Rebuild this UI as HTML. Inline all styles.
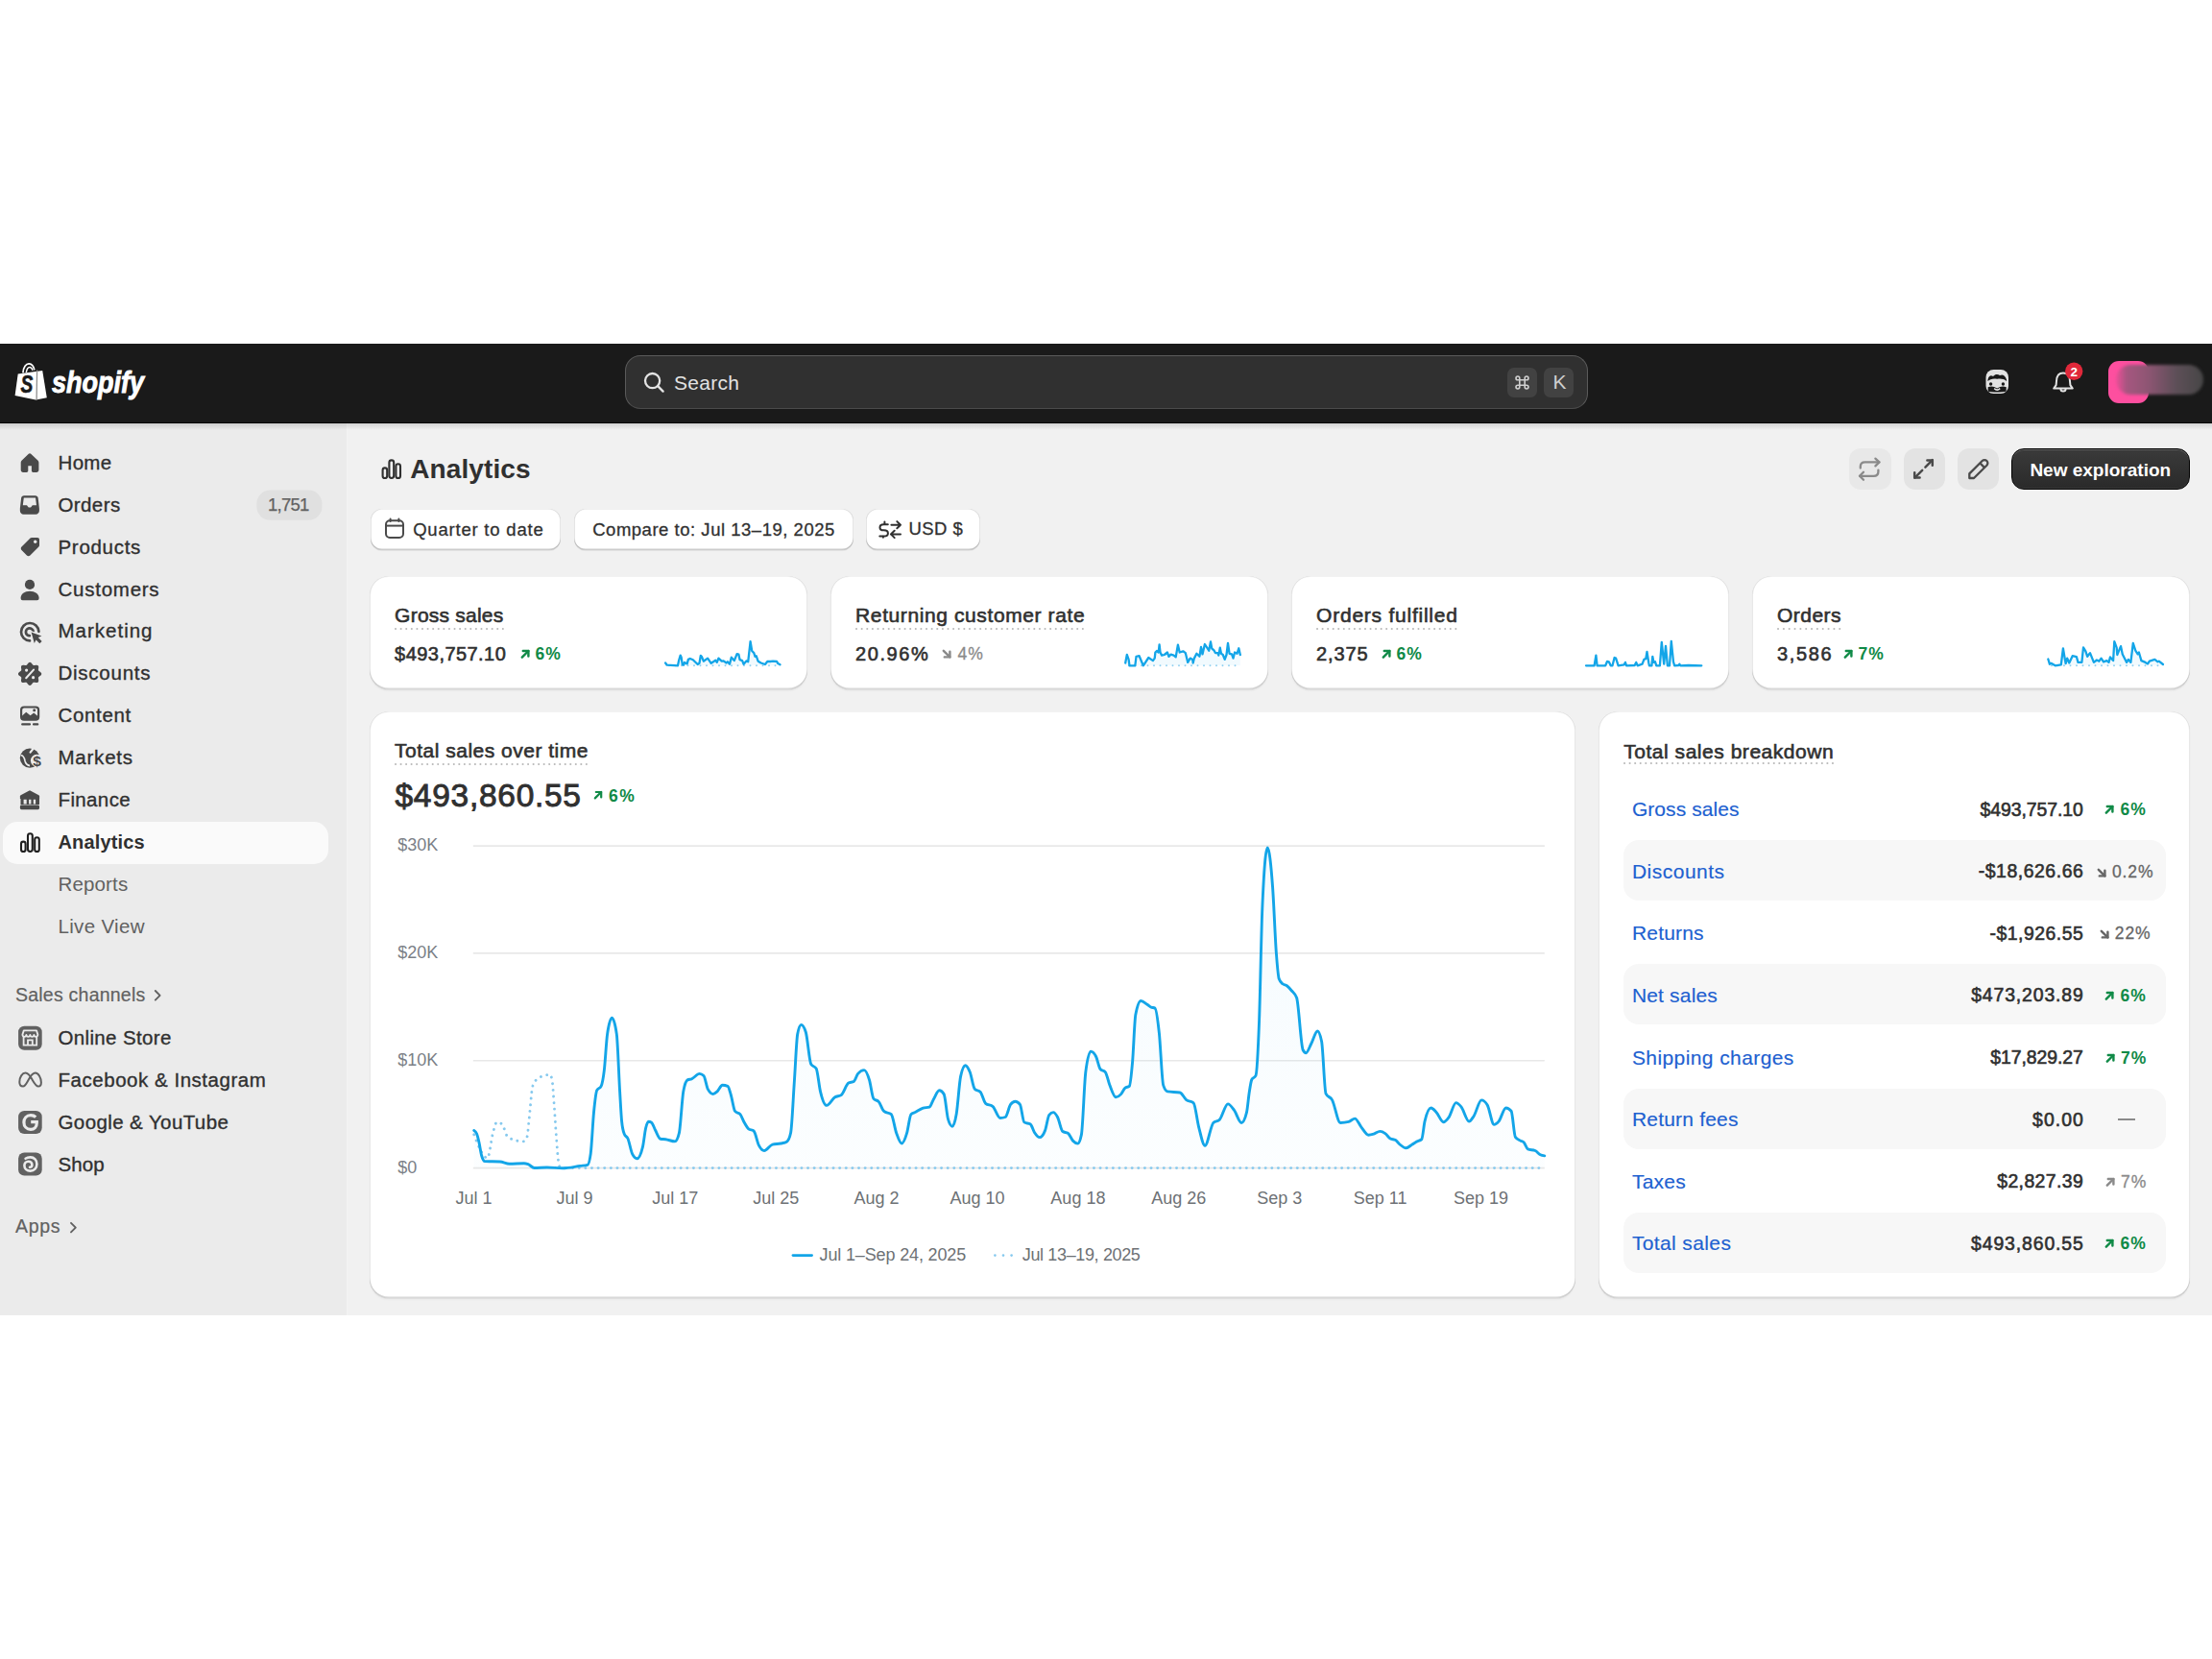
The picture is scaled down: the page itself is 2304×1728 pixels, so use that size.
<!DOCTYPE html>
<html><head><meta charset="utf-8"><title>Analytics</title>
<style>
*{box-sizing:border-box;margin:0;padding:0}
html,body{width:2304px;height:1728px;background:#fff;overflow:hidden;font-family:"Liberation Sans",sans-serif;color:#303030}
.abs{position:absolute}
.t{position:absolute;white-space:nowrap;line-height:1}
.nav-t{-webkit-text-stroke:0.35px #303030}
.card{position:absolute;background:#fff;border-radius:20px;box-shadow:0 1px 0 rgba(0,0,0,.05),0 2px 2px rgba(0,0,0,.03),inset 0 -1.5px 0 rgba(0,0,0,.15),inset 1px 0 0 rgba(0,0,0,.09),inset -1px 0 0 rgba(0,0,0,.09),inset 0 1px 0 rgba(0,0,0,.05)}
.btn{position:absolute;background:#fff;border-radius:12px;box-shadow:0 1px 0 rgba(0,0,0,.06),inset 0 -1.5px 0 rgba(0,0,0,.2),inset 1px 0 0 rgba(0,0,0,.1),inset -1px 0 0 rgba(0,0,0,.1),inset 0 1px 0 rgba(0,0,0,.06)}
.med{-webkit-text-stroke:0.3px currentColor}
</style></head>
<body>
<div class="abs" style="left:0;top:358px;width:2304px;height:83px;background:#1a1a1a;border-bottom:1px solid #050505"></div>
<div class="abs" style="left:0;top:441px;width:361px;height:929px;background:#ebebeb"></div>
<div class="abs" style="left:361px;top:441px;width:1943px;height:929px;background:#f1f1f1;border-left:1px solid #f3f3f3"></div>
<div class="abs" style="left:0;top:441px;width:2304px;height:7px;background:linear-gradient(rgba(0,0,0,.13),rgba(0,0,0,0))"></div>
<svg class="abs" style="left:0;top:358px" width="400" height="83" viewBox="0 358 400 83">
 <path d="M15.6,412 L18.7,389.6 L44.2,386 L48.8,414.2 L37.3,416.6 Z" fill="#fff"/>
 <path d="M38.6,385.6 L38.1,416.4" stroke="#8f8f8f" stroke-width="1.3"/>
 <path d="M23.9,388.4 C24.3,382.4 27.2,378.7 30.3,378.9 C33.1,379.1 35,381.4 35.9,385.4" fill="none" stroke="#fff" stroke-width="1.7"/>
 <path d="M27.3,388 C27.9,384.3 29.5,382.3 31.2,382.5 C32.6,382.7 33.5,383.9 34,385.8" fill="none" stroke="#fff" stroke-width="1.5"/>
 <text x="21.6" y="409.2" font-family="Liberation Sans" font-weight="700" font-style="italic" font-size="26" fill="#1a1a1a" stroke="#1a1a1a" stroke-width="0.6" transform="translate(21.6 0) scale(0.74 1) translate(-21.6 0)">S</text>
 <text x="54" y="408.7" font-family="Liberation Sans" font-weight="700" font-style="italic" font-size="31" fill="#fff" stroke="#fff" stroke-width="0.9" transform="translate(54 0) scale(0.873 1) translate(-54 0)">shopify</text>
</svg>
<div class="abs" style="left:651px;top:369.5px;width:1003px;height:56px;border-radius:16px;background:#303030;border:1.5px solid #5a5a5a;border-bottom-color:#4a4a4a"></div>
<svg class="abs" style="left:660px;top:380px" width="40" height="40" viewBox="660 380 40 40">
 <circle cx="679.6" cy="396.6" r="7.6" fill="none" stroke="#e3e3e3" stroke-width="2.3"/>
 <path d="M685.2,402.2 L690.6,407.6" stroke="#e3e3e3" stroke-width="2.4" stroke-linecap="round"/>
</svg>
<div class="t" style="left:702px;top:388px;font-size:21px;color:#e3e3e3;letter-spacing:0.26px">Search</div>
<div class="abs" style="left:1570px;top:382.5px;width:31px;height:31.5px;border-radius:7px;background:#424242"></div>
<div class="abs" style="left:1608px;top:382.5px;width:31px;height:31.5px;border-radius:7px;background:#424242"></div>
<svg class="abs" style="left:1578px;top:390.5px" width="15" height="15" viewBox="0 0 15 15">
 <path d="M4.8 4.8 V2.9 A1.9 1.9 0 1 0 2.9 4.8 H12.1 A1.9 1.9 0 1 0 10.2 2.9 V12.1 A1.9 1.9 0 1 0 12.1 10.2 H2.9 A1.9 1.9 0 1 0 4.8 12.1 Z" fill="none" stroke="#cfcfcf" stroke-width="1.6"/>
</svg>
<div class="t" style="left:1617.4px;top:387.4px;font-size:21px;color:#cfcfcf">K</div>
<svg class="abs" style="left:2060px;top:370px" width="244" height="60" viewBox="2060 370 244 60">
 <rect x="2068.5" y="385" width="23.5" height="25" rx="8" fill="#e3e3e3"/>
 <path d="M2070.5,395.5 C2071.5,391 2074,390.8 2076,392 C2078,389.6 2081,389.4 2083,391 C2085.5,389.6 2088.6,390.6 2090,395.5 L2090.2,397 C2087,394.6 2084,394.2 2080.2,394.8 C2076,394 2073,394.8 2070.4,397 Z" fill="#1a1a1a"/>
 <circle cx="2073.6" cy="400" r="1.7" fill="#1a1a1a"/>
 <circle cx="2086.4" cy="400" r="1.7" fill="#1a1a1a"/>
 <path d="M2070.6,403.2 C2074,401.8 2077,402.4 2080.2,404.4 C2083.4,402.4 2086.4,401.8 2089.8,403.2 L2089.6,407.8 C2086,408.8 2074,408.8 2070.8,407.8 Z" fill="#1a1a1a"/>
 <path d="M2077.2,404.6 Q2080.2,407.6 2083.2,404.6" fill="none" stroke="#e3e3e3" stroke-width="1.5"/>
 <path d="M2149,388.6 C2144.2,388.6 2142.2,392.5 2142,397 L2141.6,401.2 L2139.2,404.6 L2158.8,404.6 L2156.4,401.2 L2156,397 C2155.8,392.5 2153.8,388.6 2149,388.6 Z" fill="none" stroke="#e3e3e3" stroke-width="2" stroke-linejoin="round"/>
 <path d="M2146.4,405 A2.6,2.6 0 0 0 2151.6,405" fill="none" stroke="#e3e3e3" stroke-width="2"/>
 <circle cx="2160.2" cy="386.8" r="9.2" fill="#e0283a"/>
 <text x="2160.2" y="391.6" text-anchor="middle" font-family="Liberation Sans" font-weight="700" font-size="13.5" fill="#fff">2</text>
</svg>
<div class="abs" style="left:2196px;top:376px;width:42px;height:43.5px;border-radius:11px;background:#fd4f9f"></div>
<div class="abs" style="left:2204px;top:379.5px;width:91px;height:31px;border-radius:15.5px;background:linear-gradient(90deg,rgba(170,80,125,0.2) 0%,#a65680 12%,#8c5572 38%,#5e4f58 68%,#464646 100%);filter:blur(1.6px)"></div>


<div id="side"></div>
<svg class="abs" style="left:0;top:441px" width="361" height="929" viewBox="0 441 361 929">
 <g fill="#4a4a4a">
  <path d="M31 472.3 C30.5 472.3 30.1 472.5 29.8 472.8 L22.5 479.8 C22 480.3 21.7 481 21.7 481.7 V489.6 C21.7 490.9 22.8 492 24.1 492 H27.6 C28.5 492 29.3 491.2 29.3 490.3 V485.3 H32.9 V490.3 C32.9 491.2 33.7 492 34.6 492 H38 C39.3 492 40.4 490.9 40.4 489.6 V481.7 C40.4 481 40.1 480.3 39.6 479.8 L32.2 472.8 C31.9 472.5 31.5 472.3 31 472.3 Z"/>
  <path fill-rule="evenodd" d="M25 516.2 H36.8 C38.4 516.2 39.5 517.3 39.7 518.8 L40.9 529.5 V532 C40.9 534 39.3 535.7 37.3 535.7 H24.4 C22.4 535.7 20.85 534 20.85 532 V529.5 L22.1 518.8 C22.3 517.3 23.4 516.2 25 516.2 Z M24.8 518.6 H37 L38 526.3 H34.6 C33.8 526.3 33.3 526.8 32.9 527.4 C32.4 528.2 31.7 528.6 30.9 528.6 C30.1 528.6 29.4 528.2 28.9 527.4 C28.5 526.8 28 526.3 27.2 526.3 H23.8 Z"/>
  <path d="M33 560 H39 C40.2 560 41 560.8 41 562 V568 C41 568.6 40.8 569.1 40.4 569.5 L31.4 578.5 C30.4 579.5 28.9 579.5 27.9 578.5 L22.5 573.1 C21.5 572.1 21.5 570.6 22.5 569.6 L31.5 560.6 C31.9 560.2 32.4 560 33 560 Z"/>
  <circle cx="36.7" cy="564.3" r="1.7" fill="#ebebeb"/>
  <circle cx="31" cy="608.9" r="5.1"/>
  <path d="M21.6 623 C21.6 618.8 25.6 615.8 31 615.8 C36.4 615.8 40.6 618.8 40.6 623 C40.6 624.3 39.8 625.3 38.6 625.3 H23.6 C22.4 625.3 21.6 624.3 21.6 623 Z"/>
  <path d="M31 667.4 A9.2 9.2 0 1 1 40.4 657.8" fill="none" stroke="#4a4a4a" stroke-width="2.7" stroke-linecap="round"/>
  <path d="M30.8 662.2 A3.9 3.9 0 1 1 34.6 657.4" fill="none" stroke="#4a4a4a" stroke-width="2.7" stroke-linecap="round"/>
  <path d="M32.6 658.4 L43.4 662.4 L39.8 664.1 L43.6 667.9 L41.3 670.2 L37.5 666.4 L35.8 670 Z" stroke="#ebebeb" stroke-width="2.2" stroke-linejoin="round" paint-order="stroke"/>
  <path d="M31.10,689.75 L31.88,689.94 L32.60,690.47 L33.23,691.21 L33.76,691.98 L34.26,692.60 L34.79,692.98 L35.44,693.09 L36.24,693.00 L37.16,692.84 L38.12,692.76 L39.00,692.89 L39.69,693.31 L40.11,694.00 L40.24,694.88 L40.16,695.84 L40.00,696.76 L39.91,697.56 L40.02,698.21 L40.40,698.74 L41.02,699.24 L41.79,699.77 L42.53,700.40 L43.06,701.12 L43.25,701.90 L43.06,702.68 L42.53,703.40 L41.79,704.03 L41.02,704.56 L40.40,705.06 L40.02,705.59 L39.91,706.24 L40.00,707.04 L40.16,707.96 L40.24,708.92 L40.11,709.80 L39.69,710.49 L39.00,710.91 L38.12,711.04 L37.16,710.96 L36.24,710.80 L35.44,710.71 L34.79,710.82 L34.26,711.20 L33.76,711.82 L33.23,712.59 L32.60,713.33 L31.88,713.86 L31.10,714.05 L30.32,713.86 L29.60,713.33 L28.97,712.59 L28.44,711.82 L27.94,711.20 L27.41,710.82 L26.76,710.71 L25.96,710.80 L25.04,710.96 L24.08,711.04 L23.20,710.91 L22.51,710.49 L22.09,709.80 L21.96,708.92 L22.04,707.96 L22.20,707.04 L22.29,706.24 L22.18,705.59 L21.80,705.06 L21.18,704.56 L20.41,704.03 L19.67,703.40 L19.14,702.68 L18.95,701.90 L19.14,701.12 L19.67,700.40 L20.41,699.77 L21.18,699.24 L21.80,698.74 L22.18,698.21 L22.29,697.56 L22.20,696.76 L22.04,695.84 L21.96,694.88 L22.09,694.00 L22.51,693.31 L23.20,692.89 L24.08,692.76 L25.04,692.84 L25.96,693.00 L26.76,693.09 L27.41,692.98 L27.94,692.60 L28.44,691.98 L28.97,691.21 L29.60,690.47 L30.32,689.94 Z"/>
  <circle cx="27.6" cy="698.1" r="1.6" fill="#ebebeb"/>
  <circle cx="34.6" cy="705.7" r="1.6" fill="#ebebeb"/>
  <path d="M35 697.6 L27.2 706.2" stroke="#ebebeb" stroke-width="2.1" stroke-linecap="round"/>
  <rect x="22.1" y="736.5" width="18" height="13.2" rx="3" fill="none" stroke="#4a4a4a" stroke-width="2.2"/>
  <path d="M22 746.6 L27.2 741.8 L31.6 745.2 L35.2 742.4 L40.1 746.6 V749.6 H22 Z"/>
  <circle cx="35.7" cy="739.8" r="1.5"/>
  <path d="M23.2 754.4 H31 M35 754.4 H39.2" stroke="#4a4a4a" stroke-width="2.2" stroke-linecap="round"/>
  <circle cx="31" cy="789.6" r="10.2"/>
  <circle cx="38.3" cy="792.2" r="6.4" fill="#ebebeb"/>
  <path d="M34.6 779.8 L31.6 783.6" stroke="#ebebeb" stroke-width="2.2" stroke-linecap="round"/>
  <path d="M21.5 786.5 C24 786.8 25.5 789.5 26 792.5 C26.6 795.5 28.6 797 31 797.6" fill="none" stroke="#ebebeb" stroke-width="1.6"/>
  <text x="38.6" y="798" text-anchor="middle" font-family="Liberation Sans" font-weight="700" font-size="15.5">$</text>
  <path d="M31 823.3 L21.6 828.2 C21.1 828.5 20.9 829 20.9 829.6 V832 H41.1 V829.6 C41.1 829 40.9 828.5 40.4 828.2 Z"/>
  <path d="M21.5 832 H41 V838 H21.5 Z M24.6 832.8 V837.4 H27.7 V832.8 Z M30.1 832.8 V837.4 H32.4 V832.8 Z M34.8 832.8 V837.4 H37.1 V832.8 Z" fill-rule="evenodd"/>
  <rect x="20.9" y="838.6" width="20.1" height="4.6" rx="1.4"/>
 </g>
 <rect x="3" y="856" width="339" height="44" rx="15" fill="#fafafa"/>
 <g fill="none" stroke="#1f1f1f" stroke-width="2.1">
  <rect x="22" y="876.6" width="4.6" height="10.4" rx="2.3"/>
  <rect x="29" y="868.2" width="4.8" height="18.8" rx="2.4"/>
  <rect x="36.2" y="872.2" width="4.6" height="14.8" rx="2.3"/>
 </g>
 <g fill="#616161">
  <rect x="19.1" y="1068.7" width="24.6" height="25.1" rx="6.2"/>
  <path d="M24.8 1073.4 H38 L39.4 1077.6 C39.4 1079 38.6 1079.8 37.4 1079.8 C36.3 1079.8 35.4 1079 35.4 1077.8 C35.4 1079 34.5 1079.8 33.4 1079.8 C32.3 1079.8 31.4 1079 31.4 1077.8 C31.4 1079 30.5 1079.8 29.4 1079.8 C28.3 1079.8 27.4 1079 27.4 1077.8 C27.4 1079 26.5 1079.8 25.4 1079.8 C24.2 1079.8 23.4 1079 23.4 1077.6 Z" fill="none" stroke="#ebebeb" stroke-width="1.8" stroke-linejoin="round"/>
  <path d="M24.6 1080 V1088.6 H38.2 V1080 M29 1088.6 V1083.4 H33.8 V1088.6" fill="none" stroke="#ebebeb" stroke-width="1.8"/>
  <path d="M24 1131.6 C21.6 1131.6 20.3 1129.6 20.3 1127 C20.3 1122 23.2 1117.6 26.6 1117.6 C29.6 1117.6 31.5 1121 33.5 1124.5 C35.5 1128 37.5 1131.6 40 1131.6 C42 1131.6 42.9 1129.8 42.9 1127.5 C42.9 1122.5 40 1117.6 36.8 1117.6 C33.8 1117.6 31.8 1121 29.8 1124.5 C27.8 1128 26.3 1131.6 24 1131.6 Z" fill="none" stroke="#616161" stroke-width="2"/>
  <rect x="19.1" y="1156.9" width="24.6" height="24.1" rx="6.2"/>
  <path d="M37.2 1163.6 C36 1162.4 34.2 1161.6 32 1161.6 C27.7 1161.6 24.9 1164.8 24.9 1169 C24.9 1173.2 27.8 1176.4 32 1176.4 C35.6 1176.4 38.3 1174 38.3 1169.8 V1168.6 H32.2" fill="none" stroke="#ebebeb" stroke-width="3.2"/>
  <rect x="19.1" y="1200.5" width="24.6" height="24.1" rx="6.2"/>
  <path d="M26.6 1206.8 C28 1205.8 29.8 1205.4 31.6 1205.4 C35.6 1205.4 38.4 1208.5 38.4 1212.5 C38.4 1216.6 35.5 1219.6 31.6 1219.6 C28 1219.6 25.4 1217.2 25.4 1214 C25.4 1211.6 27.2 1209.8 29.6 1209.8 C31.8 1209.8 33.4 1211.3 33.4 1213.3 C33.4 1214.8 32.4 1215.8 31 1215.8" fill="none" stroke="#ebebeb" stroke-width="2.6" stroke-linecap="round"/>
 </g>
 <path d="M161.8 1032 L166.6 1036.8 L161.8 1041.6" fill="none" stroke="#616161" stroke-width="1.9" stroke-linecap="round" stroke-linejoin="round"/>
 <path d="M74 1273.8 L78.8 1278.6 L74 1283.4" fill="none" stroke="#616161" stroke-width="1.9" stroke-linecap="round" stroke-linejoin="round"/>
 <rect x="267.4" y="510.6" width="68" height="31.2" rx="14" fill="#e0e0e0"/>
</svg><div class="t" style="left:60.50px;top:471.85px;font-size:20.5px;color:#303030;font-weight:400;-webkit-text-stroke:0.35px #303030;letter-spacing:0.33px">Home</div>
<div class="t" style="left:60.50px;top:515.75px;font-size:20.5px;color:#303030;font-weight:400;-webkit-text-stroke:0.35px #303030;letter-spacing:0.4px">Orders</div>
<div class="t" style="left:60.50px;top:559.65px;font-size:20.5px;color:#303030;font-weight:400;-webkit-text-stroke:0.35px #303030;letter-spacing:0.7px">Products</div>
<div class="t" style="left:60.50px;top:603.55px;font-size:20.5px;color:#303030;font-weight:400;-webkit-text-stroke:0.35px #303030;letter-spacing:0.75px">Customers</div>
<div class="t" style="left:60.50px;top:647.45px;font-size:20.5px;color:#303030;font-weight:400;-webkit-text-stroke:0.35px #303030;letter-spacing:1.0px">Marketing</div>
<div class="t" style="left:60.50px;top:691.25px;font-size:20.5px;color:#303030;font-weight:400;-webkit-text-stroke:0.35px #303030;letter-spacing:0.75px">Discounts</div>
<div class="t" style="left:60.50px;top:735.15px;font-size:20.5px;color:#303030;font-weight:400;-webkit-text-stroke:0.35px #303030;letter-spacing:0.67px">Content</div>
<div class="t" style="left:60.50px;top:779.05px;font-size:20.5px;color:#303030;font-weight:400;-webkit-text-stroke:0.35px #303030;letter-spacing:0.77px">Markets</div>
<div class="t" style="left:60.50px;top:822.95px;font-size:20.5px;color:#303030;font-weight:400;-webkit-text-stroke:0.35px #303030;letter-spacing:0.37px">Finance</div>
<div class="t" style="left:60.50px;top:867.27px;font-size:20px;color:#303030;font-weight:700;letter-spacing:0.15px">Analytics</div>
<div class="t" style="left:60.50px;top:910.65px;font-size:20.5px;color:#616161;font-weight:400;letter-spacing:0.15px">Reports</div>
<div class="t" style="left:60.50px;top:954.55px;font-size:20.5px;color:#616161;font-weight:400;letter-spacing:0.33px">Live View</div>
<div class="t" style="right:1983.40px;top:517.14px;font-size:18.5px;color:#616161;font-weight:400;-webkit-text-stroke:0.25px #616161;letter-spacing:-0.8px;margin-right:-0.8px">1,751</div>
<div class="t" style="left:16.00px;top:1026.99px;font-size:19.5px;color:#616161;font-weight:400;-webkit-text-stroke:0.2px #616161;letter-spacing:0.23px">Sales channels</div>
<div class="t" style="left:60.50px;top:1070.65px;font-size:20.5px;color:#303030;font-weight:400;-webkit-text-stroke:0.35px #303030;letter-spacing:0.35px">Online Store</div>
<div class="t" style="left:60.50px;top:1114.65px;font-size:20.5px;color:#303030;font-weight:400;-webkit-text-stroke:0.35px #303030;letter-spacing:0.53px">Facebook &amp; Instagram</div>
<div class="t" style="left:60.50px;top:1158.75px;font-size:20.5px;color:#303030;font-weight:400;-webkit-text-stroke:0.35px #303030;letter-spacing:0.4px">Google &amp; YouTube</div>
<div class="t" style="left:60.50px;top:1202.55px;font-size:20.5px;color:#303030;font-weight:400;-webkit-text-stroke:0.35px #303030;letter-spacing:0.1px">Shop</div>
<div class="t" style="left:16.00px;top:1268.49px;font-size:19.5px;color:#616161;font-weight:400;-webkit-text-stroke:0.2px #616161;letter-spacing:0.7px">Apps</div>
<svg class="abs" style="left:390px;top:470px" width="40" height="36" viewBox="390 470 40 36"><g fill="none" stroke="#303030" stroke-width="2.1"><rect x="398.6" y="487.4" width="4.6" height="10.6" rx="2.3"/><rect x="405.4" y="479.4" width="4.8" height="18.6" rx="2.4"/><rect x="412.4" y="483.2" width="4.6" height="14.8" rx="2.3"/></g></svg>
<div class="t" style="left:427.20px;top:474.80px;font-size:28px;color:#303030;font-weight:700;letter-spacing:0.11px">Analytics</div>
<div class="abs" style="left:1926px;top:466.5px;width:43.5px;height:43.5px;border-radius:12px;background:#e8e8e8"></div>
<div class="abs" style="left:1982.5px;top:466.5px;width:43.5px;height:43.5px;border-radius:12px;background:#e3e3e3"></div>
<div class="abs" style="left:2038.5px;top:466.5px;width:43.5px;height:43.5px;border-radius:12px;background:#e3e3e3"></div>
<svg class="abs" style="left:1926px;top:466px" width="160" height="44" viewBox="1926 466 160 44"><g fill="none" stroke="#8a8a8a" stroke-width="2.3" stroke-linecap="round" stroke-linejoin="round"><path d="M1937.8 487.6 V486 C1937.8 483.2 1939.8 481.4 1942.6 481.4 H1957.4"/><path d="M1953.4 477.6 L1957.4 481.4 L1953.4 485.4"/><path d="M1956.4 489.6 V491.2 C1956.4 494 1954.4 495.8 1951.6 495.8 H1937"/><path d="M1941 491.8 L1937 495.8 L1941 499.8"/></g><g fill="none" stroke="#4a4a4a" stroke-width="2.5" stroke-linecap="round" stroke-linejoin="round"><path d="M2002.2 489.8 L1994.4 497.6"/><path d="M2005.4 486.6 L2012.8 479.2"/><path d="M2007.4 479.4 H2012.8 V484.8"/><path d="M1994.2 492.2 V497.6 H1999.6"/></g><g fill="none" stroke="#4a4a4a" stroke-width="2.3" stroke-linejoin="round"><path d="M2051.3 498 V493.4 L2064.7 480 C2066 478.7 2068.1 478.7 2069.4 480 C2070.7 481.3 2070.7 483.4 2069.4 484.7 L2056 498 Z"/><path d="M2062.4 482.4 L2067.1 487.1"/></g></svg>
<div class="abs" style="left:2095px;top:466.8px;width:185.5px;height:43.2px;border-radius:13px;background:linear-gradient(#3a3a3a,#2a2a2a);border:1.2px solid #000;box-shadow:inset 0 1px 0 rgba(255,255,255,.22),inset 0 -1px 0 rgba(255,255,255,.08)"></div>
<div class="t" style="left:2114.40px;top:480.12px;font-size:19px;color:#fff;font-weight:700;letter-spacing:0px">New exploration</div>
<div class="btn" style="left:385.9px;top:529.8px;width:198.4px;height:42.9px"></div>
<div class="btn" style="left:597.5px;top:529.8px;width:291.6px;height:42.9px"></div>
<div class="btn" style="left:901.8px;top:529.8px;width:119.3px;height:42.9px"></div>
<svg class="abs" style="left:396px;top:535px" width="30" height="32" viewBox="396 535 30 32"><g fill="none" stroke="#4a4a4a" stroke-width="2"><rect x="402" y="542.2" width="18" height="17.8" rx="4"/><path d="M402.2 547.6 H419.8"/><path d="M406.6 540.4 V543 M415.4 540.4 V543" stroke-linecap="round"/></g></svg>
<div class="t" style="left:430.20px;top:542.54px;font-size:18.5px;color:#303030;font-weight:400;-webkit-text-stroke:0.3px #303030;letter-spacing:0.79px">Quarter to date</div>
<div class="t" style="left:617.20px;top:542.54px;font-size:18.5px;color:#303030;font-weight:400;-webkit-text-stroke:0.3px #303030;letter-spacing:0.52px">Compare to: Jul 13&#8211;19, 2025</div>
<svg class="abs" style="left:910px;top:538px" width="34" height="26" viewBox="910 538 34 26"><g fill="none" stroke="#303030" stroke-width="2" stroke-linecap="round" stroke-linejoin="round"><path d="M924.8 546.2 H920.4 C918 546.2 916.5 547.6 916.5 549.4 C916.5 551.3 918 552.3 920.6 552.3 C923.3 552.3 924.9 553.5 924.9 555.5 C924.9 557.4 923.4 558.5 921 558.5 H916.3"/><path d="M921.4 543.4 V546 M919.9 558.8 V559.8"/><path d="M928.4 546.7 H938 M934.3 543.1 L938 546.7 L934.3 550.3"/><path d="M938 556.4 H927.9 M931.7 552.7 L927.9 556.4 L931.7 560.1"/></g></svg>
<div class="t" style="left:946.40px;top:542.34px;font-size:18.5px;color:#303030;font-weight:400;-webkit-text-stroke:0.3px #303030;letter-spacing:0.5px">USD $</div>
<div class="card" style="left:384.9px;top:599.6px;width:456px;height:118.4px"></div>
<div class="card" style="left:864.9px;top:599.6px;width:456px;height:118.4px"></div>
<div class="card" style="left:1344.9px;top:599.6px;width:456px;height:118.4px"></div>
<div class="card" style="left:1824.9px;top:599.6px;width:456px;height:118.4px"></div>
<div class="t" style="left:411.10px;top:630.42px;font-size:21px;color:#303030;font-weight:400;letter-spacing:0.23px;-webkit-text-stroke:0.6px #303030">Gross sales</div>
<div class="t" style="left:411.10px;top:671.17px;font-size:20px;color:#303030;font-weight:400;letter-spacing:0.45px;-webkit-text-stroke:0.6px #303030">$493,757.10</div>
<div class="t" style="left:891.10px;top:630.42px;font-size:21px;color:#303030;font-weight:400;letter-spacing:0.6px;-webkit-text-stroke:0.6px #303030">Returning customer rate</div>
<div class="t" style="left:891.10px;top:671.17px;font-size:20px;color:#303030;font-weight:400;letter-spacing:1.56px;-webkit-text-stroke:0.6px #303030">20.96%</div>
<div class="t" style="left:1371.10px;top:630.42px;font-size:21px;color:#303030;font-weight:400;letter-spacing:0.76px;-webkit-text-stroke:0.6px #303030">Orders fulfilled</div>
<div class="t" style="left:1371.10px;top:671.17px;font-size:20px;color:#303030;font-weight:400;letter-spacing:0.9px;-webkit-text-stroke:0.6px #303030">2,375</div>
<div class="t" style="left:1851.10px;top:630.42px;font-size:21px;color:#303030;font-weight:400;letter-spacing:0.44px;-webkit-text-stroke:0.6px #303030">Orders</div>
<div class="t" style="left:1851.10px;top:671.17px;font-size:20px;color:#303030;font-weight:400;letter-spacing:1.6px;-webkit-text-stroke:0.6px #303030">3,586</div>
<svg class="abs" style="left:410.1px;top:651.5px" width="116.9" height="6" viewBox="410.10 651.55 116.90 6"><g fill="#b8b8b8"><circle cx="412.15" cy="654.55" r="1.05"/><circle cx="417.74" cy="654.55" r="1.05"/><circle cx="423.33" cy="654.55" r="1.05"/><circle cx="428.92" cy="654.55" r="1.05"/><circle cx="434.51" cy="654.55" r="1.05"/><circle cx="440.10" cy="654.55" r="1.05"/><circle cx="445.69" cy="654.55" r="1.05"/><circle cx="451.28" cy="654.55" r="1.05"/><circle cx="456.87" cy="654.55" r="1.05"/><circle cx="462.46" cy="654.55" r="1.05"/><circle cx="468.05" cy="654.55" r="1.05"/><circle cx="473.64" cy="654.55" r="1.05"/><circle cx="479.23" cy="654.55" r="1.05"/><circle cx="484.82" cy="654.55" r="1.05"/><circle cx="490.41" cy="654.55" r="1.05"/><circle cx="496.00" cy="654.55" r="1.05"/><circle cx="501.59" cy="654.55" r="1.05"/><circle cx="507.18" cy="654.55" r="1.05"/><circle cx="512.77" cy="654.55" r="1.05"/><circle cx="518.36" cy="654.55" r="1.05"/><circle cx="523.95" cy="654.55" r="1.05"/></g></svg>
<svg class="abs" style="left:540.5px;top:674.7px" width="12.4" height="12.4" viewBox="540.50 674.70 12.40 12.40"><g fill="none" stroke="#108a47" stroke-width="2.45" stroke-linecap="round" stroke-linejoin="round"><path d="M543.30 684.30 L549.90 677.70"/><path d="M544.30 677.70 H549.90 V683.30"/></g></svg>
<div class="t" style="left:557.50px;top:672.69px;font-size:17.5px;color:#108a47;font-weight:700;letter-spacing:0.9px">6%</div>
<svg class="abs" style="left:890.1px;top:651.5px" width="240.9" height="6" viewBox="890.10 651.55 240.90 6"><g fill="#b8b8b8"><circle cx="892.15" cy="654.55" r="1.05"/><circle cx="897.76" cy="654.55" r="1.05"/><circle cx="903.38" cy="654.55" r="1.05"/><circle cx="908.99" cy="654.55" r="1.05"/><circle cx="914.61" cy="654.55" r="1.05"/><circle cx="920.22" cy="654.55" r="1.05"/><circle cx="925.84" cy="654.55" r="1.05"/><circle cx="931.45" cy="654.55" r="1.05"/><circle cx="937.06" cy="654.55" r="1.05"/><circle cx="942.68" cy="654.55" r="1.05"/><circle cx="948.29" cy="654.55" r="1.05"/><circle cx="953.91" cy="654.55" r="1.05"/><circle cx="959.52" cy="654.55" r="1.05"/><circle cx="965.14" cy="654.55" r="1.05"/><circle cx="970.75" cy="654.55" r="1.05"/><circle cx="976.36" cy="654.55" r="1.05"/><circle cx="981.98" cy="654.55" r="1.05"/><circle cx="987.59" cy="654.55" r="1.05"/><circle cx="993.21" cy="654.55" r="1.05"/><circle cx="998.82" cy="654.55" r="1.05"/><circle cx="1004.44" cy="654.55" r="1.05"/><circle cx="1010.05" cy="654.55" r="1.05"/><circle cx="1015.66" cy="654.55" r="1.05"/><circle cx="1021.28" cy="654.55" r="1.05"/><circle cx="1026.89" cy="654.55" r="1.05"/><circle cx="1032.51" cy="654.55" r="1.05"/><circle cx="1038.12" cy="654.55" r="1.05"/><circle cx="1043.74" cy="654.55" r="1.05"/><circle cx="1049.35" cy="654.55" r="1.05"/><circle cx="1054.96" cy="654.55" r="1.05"/><circle cx="1060.58" cy="654.55" r="1.05"/><circle cx="1066.19" cy="654.55" r="1.05"/><circle cx="1071.81" cy="654.55" r="1.05"/><circle cx="1077.42" cy="654.55" r="1.05"/><circle cx="1083.04" cy="654.55" r="1.05"/><circle cx="1088.65" cy="654.55" r="1.05"/><circle cx="1094.26" cy="654.55" r="1.05"/><circle cx="1099.88" cy="654.55" r="1.05"/><circle cx="1105.49" cy="654.55" r="1.05"/><circle cx="1111.11" cy="654.55" r="1.05"/><circle cx="1116.72" cy="654.55" r="1.05"/><circle cx="1122.34" cy="654.55" r="1.05"/><circle cx="1127.95" cy="654.55" r="1.05"/></g></svg>
<svg class="abs" style="left:980.3px;top:675.0px" width="12.4" height="12.4" viewBox="980.30 675.00 12.40 12.40"><g fill="none" stroke="#8a8a8a" stroke-width="2.45" stroke-linecap="round" stroke-linejoin="round"><path d="M983.10 677.80 L989.70 684.40"/><path d="M984.10 684.40 H989.70 V678.80"/></g></svg>
<div class="t" style="left:997.50px;top:672.69px;font-size:17.5px;color:#8a8a8a;font-weight:400;letter-spacing:0.9px;-webkit-text-stroke:0.3px #8a8a8a">4%</div>
<svg class="abs" style="left:1370.1px;top:651.5px" width="149.4" height="6" viewBox="1370.10 651.55 149.40 6"><g fill="#b8b8b8"><circle cx="1372.15" cy="654.55" r="1.05"/><circle cx="1377.70" cy="654.55" r="1.05"/><circle cx="1383.25" cy="654.55" r="1.05"/><circle cx="1388.80" cy="654.55" r="1.05"/><circle cx="1394.35" cy="654.55" r="1.05"/><circle cx="1399.90" cy="654.55" r="1.05"/><circle cx="1405.45" cy="654.55" r="1.05"/><circle cx="1411.00" cy="654.55" r="1.05"/><circle cx="1416.55" cy="654.55" r="1.05"/><circle cx="1422.10" cy="654.55" r="1.05"/><circle cx="1427.65" cy="654.55" r="1.05"/><circle cx="1433.20" cy="654.55" r="1.05"/><circle cx="1438.75" cy="654.55" r="1.05"/><circle cx="1444.30" cy="654.55" r="1.05"/><circle cx="1449.85" cy="654.55" r="1.05"/><circle cx="1455.40" cy="654.55" r="1.05"/><circle cx="1460.95" cy="654.55" r="1.05"/><circle cx="1466.50" cy="654.55" r="1.05"/><circle cx="1472.05" cy="654.55" r="1.05"/><circle cx="1477.60" cy="654.55" r="1.05"/><circle cx="1483.15" cy="654.55" r="1.05"/><circle cx="1488.70" cy="654.55" r="1.05"/><circle cx="1494.25" cy="654.55" r="1.05"/><circle cx="1499.80" cy="654.55" r="1.05"/><circle cx="1505.35" cy="654.55" r="1.05"/><circle cx="1510.90" cy="654.55" r="1.05"/><circle cx="1516.45" cy="654.55" r="1.05"/></g></svg>
<svg class="abs" style="left:1437.7px;top:674.7px" width="12.4" height="12.4" viewBox="1437.70 674.70 12.40 12.40"><g fill="none" stroke="#108a47" stroke-width="2.45" stroke-linecap="round" stroke-linejoin="round"><path d="M1440.50 684.30 L1447.10 677.70"/><path d="M1441.50 677.70 H1447.10 V683.30"/></g></svg>
<div class="t" style="left:1454.60px;top:672.69px;font-size:17.5px;color:#108a47;font-weight:700;letter-spacing:0.9px">6%</div>
<svg class="abs" style="left:1850.1px;top:651.5px" width="69.3" height="6" viewBox="1850.10 651.55 69.30 6"><g fill="#b8b8b8"><circle cx="1852.15" cy="654.55" r="1.05"/><circle cx="1857.99" cy="654.55" r="1.05"/><circle cx="1863.82" cy="654.55" r="1.05"/><circle cx="1869.66" cy="654.55" r="1.05"/><circle cx="1875.50" cy="654.55" r="1.05"/><circle cx="1881.33" cy="654.55" r="1.05"/><circle cx="1887.17" cy="654.55" r="1.05"/><circle cx="1893.00" cy="654.55" r="1.05"/><circle cx="1898.84" cy="654.55" r="1.05"/><circle cx="1904.68" cy="654.55" r="1.05"/><circle cx="1910.51" cy="654.55" r="1.05"/><circle cx="1916.35" cy="654.55" r="1.05"/></g></svg>
<svg class="abs" style="left:1918.5px;top:674.7px" width="12.4" height="12.4" viewBox="1918.50 674.70 12.40 12.40"><g fill="none" stroke="#108a47" stroke-width="2.45" stroke-linecap="round" stroke-linejoin="round"><path d="M1921.30 684.30 L1927.90 677.70"/><path d="M1922.30 677.70 H1927.90 V683.30"/></g></svg>
<div class="t" style="left:1935.50px;top:672.69px;font-size:17.5px;color:#108a47;font-weight:700;letter-spacing:0.9px">7%</div>
<svg class="abs" style="left:688.8px;top:660px" width="128.0" height="40" viewBox="688.80 660 128.00 40"><path d="M692.90,690.50 L694.50,692.70 L705.80,693.30 L707.00,687.50 L708.50,682.60 L709.40,684.40 L710.60,692.30 L711.90,692.70 L712.80,689.90 L715.50,691.40 L716.70,686.90 L718.60,686.00 L721.60,687.20 L726.50,692.00 L728.30,690.80 L729.60,682.90 L730.80,684.10 L732.60,688.70 L736.90,685.60 L740.50,690.80 L743.60,688.70 L745.10,687.80 L746.60,689.90 L748.20,685.60 L751.50,688.70 L753.40,688.40 L756.40,690.50 L757.60,689.30 L759.80,691.70 L761.60,684.70 L764.60,688.10 L767.40,681.10 L769.20,681.70 L770.40,687.20 L772.90,688.10 L774.40,691.70 L777.20,688.40 L779.00,689.30 L781.40,668.20 L783.00,678.00 L785.10,680.10 L786.30,683.80 L787.50,683.20 L789.40,688.70 L792.40,690.50 L796.70,692.00 L799.10,689.00 L802.20,689.00 L804.90,688.70 L808.90,689.00 L810.10,691.10 L812.30,692.30 L812.30,693.30 L692.90,693.30 Z" fill="#13a5e8" fill-opacity="0.06"/><g fill="#8fd0f0"><circle cx="696.80" cy="693.30" r="0.95"/><circle cx="703.30" cy="693.30" r="0.95"/><circle cx="709.80" cy="693.30" r="0.95"/><circle cx="716.30" cy="693.30" r="0.95"/><circle cx="722.80" cy="693.30" r="0.95"/><circle cx="729.30" cy="693.30" r="0.95"/><circle cx="735.80" cy="693.30" r="0.95"/><circle cx="742.30" cy="693.30" r="0.95"/><circle cx="748.80" cy="693.30" r="0.95"/><circle cx="755.30" cy="693.30" r="0.95"/><circle cx="761.80" cy="693.30" r="0.95"/><circle cx="768.30" cy="693.30" r="0.95"/><circle cx="774.80" cy="693.30" r="0.95"/><circle cx="781.30" cy="693.30" r="0.95"/><circle cx="787.80" cy="693.30" r="0.95"/><circle cx="794.30" cy="693.30" r="0.95"/><circle cx="800.80" cy="693.30" r="0.95"/><circle cx="807.30" cy="693.30" r="0.95"/></g><path d="M692.90,690.50 L694.50,692.70 L705.80,693.30 L707.00,687.50 L708.50,682.60 L709.40,684.40 L710.60,692.30 L711.90,692.70 L712.80,689.90 L715.50,691.40 L716.70,686.90 L718.60,686.00 L721.60,687.20 L726.50,692.00 L728.30,690.80 L729.60,682.90 L730.80,684.10 L732.60,688.70 L736.90,685.60 L740.50,690.80 L743.60,688.70 L745.10,687.80 L746.60,689.90 L748.20,685.60 L751.50,688.70 L753.40,688.40 L756.40,690.50 L757.60,689.30 L759.80,691.70 L761.60,684.70 L764.60,688.10 L767.40,681.10 L769.20,681.70 L770.40,687.20 L772.90,688.10 L774.40,691.70 L777.20,688.40 L779.00,689.30 L781.40,668.20 L783.00,678.00 L785.10,680.10 L786.30,683.80 L787.50,683.20 L789.40,688.70 L792.40,690.50 L796.70,692.00 L799.10,689.00 L802.20,689.00 L804.90,688.70 L808.90,689.00 L810.10,691.10 L812.30,692.30" fill="none" stroke="#13a5e8" stroke-width="2.3" stroke-linejoin="round" stroke-linecap="round"/></svg>
<svg class="abs" style="left:1168.4px;top:660px" width="128.6" height="40" viewBox="1168.40 660 128.60 40"><path d="M1172.60,690.50 L1174.20,682.00 L1176.00,686.90 L1176.90,693.30 L1182.70,693.30 L1183.90,683.80 L1187.00,683.20 L1191.20,693.30 L1196.70,685.00 L1201.30,688.10 L1203.10,685.60 L1203.80,679.50 L1205.30,678.00 L1207.10,679.50 L1208.00,671.30 L1208.90,679.50 L1210.50,682.60 L1213.20,682.00 L1216.30,679.50 L1217.80,683.80 L1220.00,681.70 L1223.00,682.60 L1225.10,684.40 L1227.30,671.60 L1229.10,679.50 L1232.70,678.30 L1235.20,680.10 L1237.60,689.90 L1240.10,685.60 L1242.50,686.90 L1243.10,690.50 L1244.30,685.60 L1246.80,680.80 L1249.80,683.80 L1251.40,674.00 L1252.90,681.40 L1255.30,671.00 L1259.60,677.70 L1261.40,668.50 L1262.60,675.30 L1265.10,677.70 L1266.30,680.10 L1268.80,680.10 L1269.70,682.60 L1271.20,674.60 L1272.40,680.80 L1274.20,682.00 L1276.10,686.90 L1277.90,682.00 L1279.40,669.80 L1281.00,680.80 L1283.40,681.40 L1284.90,685.60 L1286.50,679.50 L1288.90,680.80 L1290.70,675.30 L1292.20,682.00 L1292.20,693.30 L1172.60,693.30 Z" fill="#13a5e8" fill-opacity="0.06"/><g fill="#8fd0f0"><circle cx="1176.40" cy="693.30" r="0.95"/><circle cx="1182.90" cy="693.30" r="0.95"/><circle cx="1189.40" cy="693.30" r="0.95"/><circle cx="1195.90" cy="693.30" r="0.95"/><circle cx="1202.40" cy="693.30" r="0.95"/><circle cx="1208.90" cy="693.30" r="0.95"/><circle cx="1215.40" cy="693.30" r="0.95"/><circle cx="1221.90" cy="693.30" r="0.95"/><circle cx="1228.40" cy="693.30" r="0.95"/><circle cx="1234.90" cy="693.30" r="0.95"/><circle cx="1241.40" cy="693.30" r="0.95"/><circle cx="1247.90" cy="693.30" r="0.95"/><circle cx="1254.40" cy="693.30" r="0.95"/><circle cx="1260.90" cy="693.30" r="0.95"/><circle cx="1267.40" cy="693.30" r="0.95"/><circle cx="1273.90" cy="693.30" r="0.95"/><circle cx="1280.40" cy="693.30" r="0.95"/><circle cx="1286.90" cy="693.30" r="0.95"/></g><path d="M1172.60,690.50 L1174.20,682.00 L1176.00,686.90 L1176.90,693.30 L1182.70,693.30 L1183.90,683.80 L1187.00,683.20 L1191.20,693.30 L1196.70,685.00 L1201.30,688.10 L1203.10,685.60 L1203.80,679.50 L1205.30,678.00 L1207.10,679.50 L1208.00,671.30 L1208.90,679.50 L1210.50,682.60 L1213.20,682.00 L1216.30,679.50 L1217.80,683.80 L1220.00,681.70 L1223.00,682.60 L1225.10,684.40 L1227.30,671.60 L1229.10,679.50 L1232.70,678.30 L1235.20,680.10 L1237.60,689.90 L1240.10,685.60 L1242.50,686.90 L1243.10,690.50 L1244.30,685.60 L1246.80,680.80 L1249.80,683.80 L1251.40,674.00 L1252.90,681.40 L1255.30,671.00 L1259.60,677.70 L1261.40,668.50 L1262.60,675.30 L1265.10,677.70 L1266.30,680.10 L1268.80,680.10 L1269.70,682.60 L1271.20,674.60 L1272.40,680.80 L1274.20,682.00 L1276.10,686.90 L1277.90,682.00 L1279.40,669.80 L1281.00,680.80 L1283.40,681.40 L1284.90,685.60 L1286.50,679.50 L1288.90,680.80 L1290.70,675.30 L1292.20,682.00" fill="none" stroke="#13a5e8" stroke-width="2.3" stroke-linejoin="round" stroke-linecap="round"/></svg>
<svg class="abs" style="left:1648.3px;top:660px" width="128.7" height="40" viewBox="1648.30 660 128.70 40"><g fill="#8fd0f0"></g><path d="M1652.30,693.30 L1660.90,693.30 L1662.70,682.60 L1663.90,693.30 L1672.50,693.30 L1674.30,689.00 L1676.10,689.30 L1678.00,693.30 L1679.80,693.30 L1681.90,685.00 L1683.40,685.60 L1685.90,693.30 L1692.00,692.30 L1693.20,689.90 L1694.40,693.30 L1703.00,693.00 L1704.50,689.90 L1706.00,693.30 L1710.90,691.70 L1712.70,686.90 L1714.60,686.20 L1715.80,678.90 L1717.60,690.50 L1718.20,693.30 L1720.70,693.30 L1721.60,683.80 L1722.80,689.90 L1724.30,689.30 L1725.60,693.30 L1729.20,693.30 L1731.10,668.80 L1733.50,691.70 L1735.30,672.80 L1737.20,693.30 L1739.30,693.30 L1741.10,667.90 L1743.30,689.30 L1744.50,693.30 L1748.80,693.00 L1749.70,691.70 L1750.60,693.30 L1759.10,693.00 L1772.60,693.30" fill="none" stroke="#13a5e8" stroke-width="2.3" stroke-linejoin="round" stroke-linecap="round"/></svg>
<svg class="abs" style="left:2128.6px;top:660px" width="128.2" height="40" viewBox="2128.60 660 128.20 40"><path d="M2132.90,686.50 L2134.50,691.70 L2136.00,690.80 L2140.30,693.30 L2146.40,692.30 L2148.50,675.30 L2151.20,691.10 L2152.80,685.60 L2154.90,690.50 L2158.30,683.20 L2162.50,684.10 L2164.10,689.90 L2168.00,689.90 L2169.60,674.30 L2172.00,678.30 L2173.80,683.80 L2176.60,680.10 L2180.50,689.90 L2183.60,687.50 L2186.00,688.70 L2188.20,685.60 L2190.60,689.30 L2194.00,688.10 L2196.10,689.90 L2197.60,684.40 L2200.70,688.10 L2201.90,668.20 L2204.30,674.60 L2204.90,682.00 L2208.60,673.10 L2210.40,681.40 L2214.70,689.90 L2216.50,686.90 L2219.00,689.90 L2221.40,669.80 L2223.90,677.70 L2226.30,681.40 L2227.50,679.50 L2230.00,688.10 L2234.20,689.90 L2236.70,691.40 L2238.50,688.70 L2244.00,686.90 L2247.10,689.30 L2248.30,688.70 L2252.60,692.00 L2252.60,693.30 L2132.90,693.30 Z" fill="#13a5e8" fill-opacity="0.06"/><g fill="#8fd0f0"><circle cx="2136.60" cy="693.30" r="0.95"/><circle cx="2143.10" cy="693.30" r="0.95"/><circle cx="2149.60" cy="693.30" r="0.95"/><circle cx="2156.10" cy="693.30" r="0.95"/><circle cx="2162.60" cy="693.30" r="0.95"/><circle cx="2169.10" cy="693.30" r="0.95"/><circle cx="2175.60" cy="693.30" r="0.95"/><circle cx="2182.10" cy="693.30" r="0.95"/><circle cx="2188.60" cy="693.30" r="0.95"/><circle cx="2195.10" cy="693.30" r="0.95"/><circle cx="2201.60" cy="693.30" r="0.95"/><circle cx="2208.10" cy="693.30" r="0.95"/><circle cx="2214.60" cy="693.30" r="0.95"/><circle cx="2221.10" cy="693.30" r="0.95"/><circle cx="2227.60" cy="693.30" r="0.95"/><circle cx="2234.10" cy="693.30" r="0.95"/><circle cx="2240.60" cy="693.30" r="0.95"/><circle cx="2247.10" cy="693.30" r="0.95"/></g><path d="M2132.90,686.50 L2134.50,691.70 L2136.00,690.80 L2140.30,693.30 L2146.40,692.30 L2148.50,675.30 L2151.20,691.10 L2152.80,685.60 L2154.90,690.50 L2158.30,683.20 L2162.50,684.10 L2164.10,689.90 L2168.00,689.90 L2169.60,674.30 L2172.00,678.30 L2173.80,683.80 L2176.60,680.10 L2180.50,689.90 L2183.60,687.50 L2186.00,688.70 L2188.20,685.60 L2190.60,689.30 L2194.00,688.10 L2196.10,689.90 L2197.60,684.40 L2200.70,688.10 L2201.90,668.20 L2204.30,674.60 L2204.90,682.00 L2208.60,673.10 L2210.40,681.40 L2214.70,689.90 L2216.50,686.90 L2219.00,689.90 L2221.40,669.80 L2223.90,677.70 L2226.30,681.40 L2227.50,679.50 L2230.00,688.10 L2234.20,689.90 L2236.70,691.40 L2238.50,688.70 L2244.00,686.90 L2247.10,689.30 L2248.30,688.70 L2252.60,692.00" fill="none" stroke="#13a5e8" stroke-width="2.3" stroke-linejoin="round" stroke-linecap="round"/></svg>
<div class="card" style="left:384.8px;top:740.6px;width:1256px;height:611.6px"></div>
<div class="t" style="left:411.10px;top:771.22px;font-size:21px;color:#303030;font-weight:400;letter-spacing:0.495px;-webkit-text-stroke:0.6px #303030">Total sales over time</div>
<svg class="abs" style="left:410.1px;top:792.5px" width="203.9" height="6" viewBox="410.10 792.50 203.90 6"><g fill="#b8b8b8"><circle cx="412.15" cy="795.50" r="1.05"/><circle cx="417.67" cy="795.50" r="1.05"/><circle cx="423.19" cy="795.50" r="1.05"/><circle cx="428.72" cy="795.50" r="1.05"/><circle cx="434.24" cy="795.50" r="1.05"/><circle cx="439.76" cy="795.50" r="1.05"/><circle cx="445.28" cy="795.50" r="1.05"/><circle cx="450.81" cy="795.50" r="1.05"/><circle cx="456.33" cy="795.50" r="1.05"/><circle cx="461.85" cy="795.50" r="1.05"/><circle cx="467.37" cy="795.50" r="1.05"/><circle cx="472.89" cy="795.50" r="1.05"/><circle cx="478.42" cy="795.50" r="1.05"/><circle cx="483.94" cy="795.50" r="1.05"/><circle cx="489.46" cy="795.50" r="1.05"/><circle cx="494.98" cy="795.50" r="1.05"/><circle cx="500.51" cy="795.50" r="1.05"/><circle cx="506.03" cy="795.50" r="1.05"/><circle cx="511.55" cy="795.50" r="1.05"/><circle cx="517.07" cy="795.50" r="1.05"/><circle cx="522.59" cy="795.50" r="1.05"/><circle cx="528.12" cy="795.50" r="1.05"/><circle cx="533.64" cy="795.50" r="1.05"/><circle cx="539.16" cy="795.50" r="1.05"/><circle cx="544.68" cy="795.50" r="1.05"/><circle cx="550.21" cy="795.50" r="1.05"/><circle cx="555.73" cy="795.50" r="1.05"/><circle cx="561.25" cy="795.50" r="1.05"/><circle cx="566.77" cy="795.50" r="1.05"/><circle cx="572.29" cy="795.50" r="1.05"/><circle cx="577.82" cy="795.50" r="1.05"/><circle cx="583.34" cy="795.50" r="1.05"/><circle cx="588.86" cy="795.50" r="1.05"/><circle cx="594.38" cy="795.50" r="1.05"/><circle cx="599.91" cy="795.50" r="1.05"/><circle cx="605.43" cy="795.50" r="1.05"/><circle cx="610.95" cy="795.50" r="1.05"/></g></svg>
<div class="t" style="left:411.50px;top:812.34px;font-size:33.5px;color:#303030;font-weight:400;letter-spacing:0.72px;-webkit-text-stroke:0.9px #303030">$493,860.55</div>
<svg class="abs" style="left:616.8px;top:822.4px" width="12.2" height="12.2" viewBox="616.80 822.40 12.20 12.20"><g fill="none" stroke="#108a47" stroke-width="2.2" stroke-linecap="round" stroke-linejoin="round"><path d="M619.60 831.80 L626.00 825.40"/><path d="M620.60 825.40 H626.00 V830.80"/></g></svg>
<div class="t" style="left:634.00px;top:821.39px;font-size:17.5px;color:#108a47;font-weight:700;letter-spacing:1.5px">6%</div>
<div class="t" style="left:414.20px;top:871.26px;font-size:18px;color:#7b7f87;font-weight:400;">$30K</div>
<div class="t" style="left:414.20px;top:983.06px;font-size:18px;color:#7b7f87;font-weight:400;">$20K</div>
<div class="t" style="left:414.20px;top:1094.96px;font-size:18px;color:#7b7f87;font-weight:400;">$10K</div>
<div class="t" style="left:414.20px;top:1206.76px;font-size:18px;color:#7b7f87;font-weight:400;">$0</div>
<div class="t" style="left:193.50px;width:600px;text-align:center;top:1239.36px;font-size:18px;color:#6d7175;font-weight:400;">Jul 1</div>
<div class="t" style="left:298.40px;width:600px;text-align:center;top:1239.36px;font-size:18px;color:#6d7175;font-weight:400;">Jul 9</div>
<div class="t" style="left:403.30px;width:600px;text-align:center;top:1239.36px;font-size:18px;color:#6d7175;font-weight:400;">Jul 17</div>
<div class="t" style="left:508.20px;width:600px;text-align:center;top:1239.36px;font-size:18px;color:#6d7175;font-weight:400;">Jul 25</div>
<div class="t" style="left:613.10px;width:600px;text-align:center;top:1239.36px;font-size:18px;color:#6d7175;font-weight:400;">Aug 2</div>
<div class="t" style="left:718.00px;width:600px;text-align:center;top:1239.36px;font-size:18px;color:#6d7175;font-weight:400;">Aug 10</div>
<div class="t" style="left:822.90px;width:600px;text-align:center;top:1239.36px;font-size:18px;color:#6d7175;font-weight:400;">Aug 18</div>
<div class="t" style="left:927.80px;width:600px;text-align:center;top:1239.36px;font-size:18px;color:#6d7175;font-weight:400;">Aug 26</div>
<div class="t" style="left:1032.70px;width:600px;text-align:center;top:1239.36px;font-size:18px;color:#6d7175;font-weight:400;">Sep 3</div>
<div class="t" style="left:1137.60px;width:600px;text-align:center;top:1239.36px;font-size:18px;color:#6d7175;font-weight:400;">Sep 11</div>
<div class="t" style="left:1242.50px;width:600px;text-align:center;top:1239.36px;font-size:18px;color:#6d7175;font-weight:400;">Sep 19</div>
<svg class="abs" style="left:385px;top:860px" width="1256" height="380" viewBox="385 860 1256 380"><defs><linearGradient id="ag" x1="0" y1="0" x2="0" y2="1"><stop offset="0" stop-color="#13a5e8" stop-opacity="0.045"/><stop offset="1" stop-color="#13a5e8" stop-opacity="0.015"/></linearGradient></defs><path d="M492.8 881.10 H1608.8" stroke="#e8e8e8" stroke-width="1.6"/><path d="M492.8 992.90 H1608.8" stroke="#e8e8e8" stroke-width="1.6"/><path d="M492.8 1104.80 H1608.8" stroke="#e8e8e8" stroke-width="1.6"/><path d="M492.8 1216.60 H1608.8" stroke="#e8e8e8" stroke-width="1.6"/><path d="M493.70,1177.50 C494.63,1178.05 495.57,1178.60 496.50,1180.80 C497.33,1182.76 498.17,1186.32 499.00,1190.00 C499.87,1193.83 500.73,1200.39 501.60,1203.50 C502.73,1207.57 503.87,1209.54 505.00,1209.60 C510.27,1209.87 515.53,1209.73 520.80,1210.00 C524.07,1210.17 527.33,1212.20 530.60,1212.20 C535.67,1212.20 540.73,1211.70 545.80,1211.70 C547.23,1211.70 548.67,1212.17 550.10,1212.70 C552.27,1213.51 554.43,1216.50 556.60,1216.50 C560.93,1216.50 565.27,1216.00 569.60,1216.00 C575.03,1216.00 580.47,1216.80 585.90,1216.80 C592.03,1216.80 598.17,1215.25 604.30,1214.40 C606.87,1214.04 609.43,1214.03 612.00,1213.30 C613.07,1213.00 614.13,1209.50 615.20,1201.90 C616.30,1194.06 617.40,1169.60 618.50,1158.50 C619.57,1147.74 620.63,1137.78 621.70,1135.70 C623.17,1132.83 624.63,1134.27 626.10,1131.40 C627.17,1129.32 628.23,1123.91 629.30,1115.10 C630.40,1106.02 631.50,1084.80 632.60,1077.10 C634.20,1065.90 635.80,1060.30 637.40,1060.30 C639.03,1060.30 640.67,1065.90 642.30,1077.10 C643.40,1084.64 644.50,1118.61 645.60,1136.80 C646.27,1147.83 646.93,1161.33 647.60,1168.00 C648.47,1176.67 649.33,1178.72 650.20,1181.00 C651.47,1184.33 652.73,1183.11 654.00,1186.00 C655.53,1189.50 657.07,1198.83 658.60,1201.90 C660.23,1205.17 661.87,1206.80 663.50,1206.80 C665.50,1206.80 667.50,1202.63 669.50,1194.30 C670.53,1189.99 671.57,1179.35 672.60,1175.00 C673.60,1170.79 674.60,1168.20 675.60,1168.20 C676.60,1168.20 677.60,1168.53 678.60,1169.20 C679.90,1170.07 681.20,1174.56 682.50,1177.00 C684.30,1180.38 686.10,1185.87 687.90,1186.20 C689.70,1186.53 691.50,1186.45 693.30,1186.70 C696.57,1187.16 699.83,1188.90 703.10,1188.90 C704.53,1188.90 705.97,1186.00 707.40,1180.20 C708.87,1174.27 710.33,1144.92 711.80,1136.80 C713.23,1128.87 714.67,1125.63 716.10,1124.90 C717.53,1124.17 718.97,1124.36 720.40,1123.80 C723.17,1122.72 725.93,1118.40 728.70,1118.40 C730.13,1118.40 731.57,1119.10 733.00,1120.50 C734.47,1121.93 735.93,1131.94 737.40,1134.60 C739.20,1137.87 741.00,1139.50 742.80,1139.50 C744.23,1139.50 745.67,1138.07 747.10,1136.80 C748.90,1135.21 750.70,1130.30 752.50,1130.30 C754.33,1130.30 756.17,1130.67 758.00,1131.40 C759.07,1131.83 760.13,1136.56 761.20,1140.00 C762.67,1144.72 764.13,1155.61 765.60,1157.40 C767.40,1159.60 769.20,1158.50 771.00,1160.70 C772.43,1162.45 773.87,1166.79 775.30,1169.30 C776.77,1171.87 778.23,1174.76 779.70,1175.90 C781.50,1177.30 783.30,1176.60 785.10,1178.00 C786.90,1179.40 788.70,1189.77 790.50,1193.20 C792.33,1196.70 794.17,1198.60 796.00,1198.60 C798.87,1198.60 801.73,1192.82 804.60,1192.10 C807.50,1191.37 810.40,1191.64 813.30,1191.00 C815.37,1190.54 817.43,1190.40 819.50,1189.20 C820.87,1188.41 822.23,1186.13 823.60,1180.00 C824.87,1174.32 826.13,1144.41 827.40,1126.00 C828.50,1110.01 829.60,1082.72 830.70,1077.10 C831.97,1070.63 833.23,1067.40 834.50,1067.40 C836.10,1067.40 837.70,1069.93 839.30,1075.00 C841.13,1080.81 842.97,1105.68 844.80,1108.60 C846.60,1111.47 848.40,1110.03 850.20,1112.90 C851.63,1115.18 853.07,1130.72 854.50,1136.80 C856.67,1145.99 858.83,1151.40 861.00,1151.40 C863.90,1151.40 866.80,1144.59 869.70,1142.80 C871.87,1141.46 874.03,1142.07 876.20,1140.60 C878.73,1138.89 881.27,1129.57 883.80,1128.10 C885.63,1127.03 887.47,1127.57 889.30,1126.50 C890.73,1125.67 892.17,1120.08 893.60,1118.40 C895.77,1115.87 897.93,1114.60 900.10,1114.60 C901.90,1114.60 903.70,1118.96 905.50,1124.90 C906.97,1129.74 908.43,1142.66 909.90,1144.40 C911.70,1146.53 913.50,1145.47 915.30,1147.60 C917.10,1149.73 918.90,1155.84 920.70,1157.40 C923.23,1159.60 925.77,1158.50 928.30,1160.70 C930.10,1162.26 931.90,1175.17 933.70,1180.20 C935.53,1185.32 937.37,1191.00 939.20,1191.00 C941.00,1191.00 942.80,1186.34 944.60,1180.20 C946.03,1175.31 947.47,1162.13 948.90,1160.70 C950.37,1159.23 951.83,1159.25 953.30,1158.50 C956.03,1157.11 958.77,1155.09 961.50,1154.20 C963.67,1153.49 965.83,1153.83 968.00,1153.10 C969.47,1152.60 970.93,1147.52 972.40,1145.00 C974.37,1141.62 976.33,1135.80 978.30,1135.80 C979.93,1135.80 981.57,1137.07 983.20,1139.60 C984.63,1141.82 986.07,1160.65 987.50,1165.60 C988.97,1170.67 990.43,1173.20 991.90,1173.20 C993.33,1173.20 994.77,1168.69 996.20,1160.20 C997.67,1151.52 999.13,1127.92 1000.60,1121.10 C1002.23,1113.50 1003.87,1109.70 1005.50,1109.70 C1007.10,1109.70 1008.70,1112.79 1010.30,1116.80 C1011.93,1120.89 1013.57,1132.46 1015.20,1134.20 C1017.20,1136.33 1019.20,1135.27 1021.20,1137.40 C1023.00,1139.32 1024.80,1147.74 1026.60,1149.30 C1029.13,1151.50 1031.67,1150.40 1034.20,1152.60 C1036.73,1154.80 1039.27,1164.50 1041.80,1164.50 C1043.60,1164.50 1045.40,1164.17 1047.20,1163.50 C1049.00,1162.83 1050.80,1152.75 1052.60,1150.40 C1054.23,1148.27 1055.87,1147.20 1057.50,1147.20 C1059.13,1147.20 1060.77,1148.27 1062.40,1150.40 C1063.87,1152.32 1065.33,1167.95 1066.80,1168.90 C1068.97,1170.30 1071.13,1169.60 1073.30,1171.00 C1074.73,1171.93 1076.17,1177.51 1077.60,1179.70 C1079.40,1182.45 1081.20,1184.60 1083.00,1184.60 C1084.83,1184.60 1086.67,1182.27 1088.50,1177.60 C1089.93,1173.95 1091.37,1163.10 1092.80,1161.30 C1094.23,1159.50 1095.67,1158.60 1097.10,1158.60 C1098.57,1158.60 1100.03,1160.76 1101.50,1163.50 C1103.30,1166.86 1105.10,1177.47 1106.90,1178.60 C1108.70,1179.73 1110.50,1179.17 1112.30,1180.30 C1114.10,1181.43 1115.90,1186.60 1117.70,1188.40 C1119.33,1190.04 1120.97,1191.10 1122.60,1191.10 C1123.87,1191.10 1125.13,1188.03 1126.40,1181.90 C1127.87,1174.80 1129.33,1128.59 1130.80,1116.80 C1132.60,1102.33 1134.40,1095.10 1136.20,1095.10 C1138.00,1095.10 1139.80,1096.90 1141.60,1100.50 C1143.07,1103.43 1144.53,1111.71 1146.00,1113.50 C1147.80,1115.70 1149.60,1114.60 1151.40,1116.80 C1152.83,1118.55 1154.27,1126.05 1155.70,1129.80 C1157.87,1135.47 1160.03,1142.80 1162.20,1142.80 C1164.03,1142.80 1165.87,1141.62 1167.70,1139.60 C1169.13,1138.02 1170.57,1134.23 1172.00,1133.10 C1173.43,1131.97 1174.87,1132.53 1176.30,1131.40 C1177.40,1130.53 1178.50,1118.70 1179.60,1106.00 C1180.67,1093.68 1181.73,1062.76 1182.80,1057.10 C1184.63,1047.37 1186.47,1042.50 1188.30,1042.50 C1190.53,1042.50 1192.77,1044.80 1195.00,1046.30 C1196.23,1047.13 1197.47,1048.37 1198.70,1049.00 C1200.13,1049.73 1201.57,1049.37 1203.00,1050.10 C1204.47,1050.85 1205.93,1062.45 1207.40,1076.10 C1208.83,1089.44 1210.27,1126.07 1211.70,1130.40 C1213.13,1134.73 1214.57,1136.66 1216.00,1136.90 C1220.33,1137.63 1224.67,1137.27 1229.00,1138.00 C1231.20,1138.37 1233.40,1143.81 1235.60,1145.60 C1238.13,1147.66 1240.67,1146.67 1243.20,1148.80 C1245.00,1150.32 1246.80,1166.80 1248.60,1173.80 C1250.77,1182.23 1252.93,1193.30 1255.10,1193.30 C1258.00,1193.30 1260.90,1172.44 1263.80,1169.50 C1265.97,1167.30 1268.13,1168.40 1270.30,1166.20 C1273.20,1163.26 1276.10,1149.90 1279.00,1149.90 C1281.17,1149.90 1283.33,1153.51 1285.50,1156.40 C1288.03,1159.78 1290.57,1169.50 1293.10,1169.50 C1294.90,1169.50 1296.70,1165.87 1298.50,1158.60 C1299.40,1154.97 1300.30,1143.75 1301.20,1138.00 C1302.07,1132.46 1302.93,1126.19 1303.80,1124.50 C1305.20,1121.77 1306.60,1123.13 1308.00,1120.40 C1309.17,1118.12 1310.33,1095.92 1311.50,1065.30 C1312.60,1036.43 1313.70,971.67 1314.80,946.00 C1316.60,904.00 1318.40,883.00 1320.20,883.00 C1322.00,883.00 1323.80,899.51 1325.60,924.30 C1326.87,941.74 1328.13,976.38 1329.40,993.00 C1330.33,1005.24 1331.27,1016.90 1332.20,1019.50 C1333.47,1023.03 1334.73,1023.65 1336.00,1024.80 C1337.47,1026.13 1338.93,1025.74 1340.40,1026.80 C1342.00,1027.96 1343.60,1029.78 1345.20,1031.70 C1347.00,1033.86 1348.80,1034.23 1350.60,1039.30 C1352.77,1045.40 1354.93,1089.03 1357.10,1093.50 C1358.17,1095.70 1359.23,1096.80 1360.30,1096.80 C1362.13,1096.80 1363.97,1090.45 1365.80,1087.00 C1367.97,1082.92 1370.13,1074.00 1372.30,1074.00 C1373.73,1074.00 1375.17,1077.60 1376.60,1084.80 C1378.07,1092.17 1379.53,1136.17 1381.00,1139.10 C1383.17,1143.43 1385.33,1141.77 1387.50,1145.60 C1390.37,1150.66 1393.23,1169.50 1396.10,1169.50 C1399.00,1169.50 1401.90,1169.13 1404.80,1168.40 C1406.97,1167.85 1409.13,1165.10 1411.30,1165.10 C1413.47,1165.10 1415.63,1171.13 1417.80,1173.80 C1420.33,1176.92 1422.87,1182.20 1425.40,1182.20 C1427.23,1182.20 1429.07,1181.65 1430.90,1181.10 C1433.07,1180.45 1435.23,1178.40 1437.40,1178.40 C1439.20,1178.40 1441.00,1179.33 1442.80,1180.60 C1444.60,1181.87 1446.40,1184.93 1448.20,1186.00 C1450.00,1187.07 1451.80,1186.53 1453.60,1187.60 C1455.07,1188.47 1456.53,1190.78 1458.00,1192.00 C1460.17,1193.80 1462.33,1195.80 1464.50,1195.80 C1466.67,1195.80 1468.83,1193.32 1471.00,1192.00 C1472.43,1191.12 1473.87,1190.11 1475.30,1189.30 C1477.13,1188.26 1478.97,1188.40 1480.80,1186.60 C1481.87,1185.55 1482.93,1172.73 1484.00,1168.10 C1486.17,1158.70 1488.33,1154.00 1490.50,1154.00 C1492.33,1154.00 1494.17,1156.49 1496.00,1158.40 C1498.50,1161.01 1501.00,1168.70 1503.50,1168.70 C1505.33,1168.70 1507.17,1166.29 1509.00,1163.80 C1511.53,1160.36 1514.07,1148.60 1516.60,1148.60 C1518.40,1148.60 1520.20,1150.69 1522.00,1152.90 C1524.70,1156.22 1527.40,1168.10 1530.10,1168.10 C1531.73,1168.10 1533.37,1165.10 1535.00,1162.70 C1537.70,1158.74 1540.40,1145.90 1543.10,1145.90 C1545.10,1145.90 1547.10,1147.53 1549.10,1150.80 C1551.47,1154.67 1553.83,1171.40 1556.20,1171.40 C1557.80,1171.40 1559.40,1169.92 1561.00,1168.10 C1563.53,1165.21 1566.07,1154.00 1568.60,1154.00 C1570.43,1154.00 1572.27,1155.10 1574.10,1157.30 C1575.53,1159.02 1576.97,1182.38 1578.40,1184.40 C1580.20,1186.93 1582.00,1187.18 1583.80,1188.20 C1584.90,1188.82 1586.00,1188.73 1587.10,1189.80 C1588.53,1191.19 1589.97,1196.30 1591.40,1196.90 C1593.93,1197.97 1596.47,1197.43 1599.00,1198.50 C1600.80,1199.26 1602.60,1201.91 1604.40,1202.80 C1605.87,1203.53 1607.33,1203.71 1608.80,1203.90 L1608.8,1216.6 L493.7,1216.6 Z" fill="url(#ag)"/><g fill="#86c9ee"><circle cx="590.00" cy="1216.6" r="1.45"/><circle cx="596.62" cy="1216.6" r="1.45"/><circle cx="603.24" cy="1216.6" r="1.45"/><circle cx="609.86" cy="1216.6" r="1.45"/><circle cx="616.48" cy="1216.6" r="1.45"/><circle cx="623.10" cy="1216.6" r="1.45"/><circle cx="629.72" cy="1216.6" r="1.45"/><circle cx="636.34" cy="1216.6" r="1.45"/><circle cx="642.96" cy="1216.6" r="1.45"/><circle cx="649.58" cy="1216.6" r="1.45"/><circle cx="656.20" cy="1216.6" r="1.45"/><circle cx="662.82" cy="1216.6" r="1.45"/><circle cx="669.44" cy="1216.6" r="1.45"/><circle cx="676.06" cy="1216.6" r="1.45"/><circle cx="682.68" cy="1216.6" r="1.45"/><circle cx="689.30" cy="1216.6" r="1.45"/><circle cx="695.92" cy="1216.6" r="1.45"/><circle cx="702.54" cy="1216.6" r="1.45"/><circle cx="709.16" cy="1216.6" r="1.45"/><circle cx="715.78" cy="1216.6" r="1.45"/><circle cx="722.40" cy="1216.6" r="1.45"/><circle cx="729.02" cy="1216.6" r="1.45"/><circle cx="735.64" cy="1216.6" r="1.45"/><circle cx="742.26" cy="1216.6" r="1.45"/><circle cx="748.88" cy="1216.6" r="1.45"/><circle cx="755.50" cy="1216.6" r="1.45"/><circle cx="762.12" cy="1216.6" r="1.45"/><circle cx="768.74" cy="1216.6" r="1.45"/><circle cx="775.36" cy="1216.6" r="1.45"/><circle cx="781.98" cy="1216.6" r="1.45"/><circle cx="788.60" cy="1216.6" r="1.45"/><circle cx="795.22" cy="1216.6" r="1.45"/><circle cx="801.84" cy="1216.6" r="1.45"/><circle cx="808.46" cy="1216.6" r="1.45"/><circle cx="815.08" cy="1216.6" r="1.45"/><circle cx="821.70" cy="1216.6" r="1.45"/><circle cx="828.32" cy="1216.6" r="1.45"/><circle cx="834.94" cy="1216.6" r="1.45"/><circle cx="841.56" cy="1216.6" r="1.45"/><circle cx="848.18" cy="1216.6" r="1.45"/><circle cx="854.80" cy="1216.6" r="1.45"/><circle cx="861.42" cy="1216.6" r="1.45"/><circle cx="868.04" cy="1216.6" r="1.45"/><circle cx="874.66" cy="1216.6" r="1.45"/><circle cx="881.28" cy="1216.6" r="1.45"/><circle cx="887.90" cy="1216.6" r="1.45"/><circle cx="894.52" cy="1216.6" r="1.45"/><circle cx="901.14" cy="1216.6" r="1.45"/><circle cx="907.76" cy="1216.6" r="1.45"/><circle cx="914.38" cy="1216.6" r="1.45"/><circle cx="921.00" cy="1216.6" r="1.45"/><circle cx="927.62" cy="1216.6" r="1.45"/><circle cx="934.24" cy="1216.6" r="1.45"/><circle cx="940.86" cy="1216.6" r="1.45"/><circle cx="947.48" cy="1216.6" r="1.45"/><circle cx="954.10" cy="1216.6" r="1.45"/><circle cx="960.72" cy="1216.6" r="1.45"/><circle cx="967.34" cy="1216.6" r="1.45"/><circle cx="973.96" cy="1216.6" r="1.45"/><circle cx="980.58" cy="1216.6" r="1.45"/><circle cx="987.20" cy="1216.6" r="1.45"/><circle cx="993.82" cy="1216.6" r="1.45"/><circle cx="1000.44" cy="1216.6" r="1.45"/><circle cx="1007.06" cy="1216.6" r="1.45"/><circle cx="1013.68" cy="1216.6" r="1.45"/><circle cx="1020.30" cy="1216.6" r="1.45"/><circle cx="1026.92" cy="1216.6" r="1.45"/><circle cx="1033.54" cy="1216.6" r="1.45"/><circle cx="1040.16" cy="1216.6" r="1.45"/><circle cx="1046.78" cy="1216.6" r="1.45"/><circle cx="1053.40" cy="1216.6" r="1.45"/><circle cx="1060.02" cy="1216.6" r="1.45"/><circle cx="1066.64" cy="1216.6" r="1.45"/><circle cx="1073.26" cy="1216.6" r="1.45"/><circle cx="1079.88" cy="1216.6" r="1.45"/><circle cx="1086.50" cy="1216.6" r="1.45"/><circle cx="1093.12" cy="1216.6" r="1.45"/><circle cx="1099.74" cy="1216.6" r="1.45"/><circle cx="1106.36" cy="1216.6" r="1.45"/><circle cx="1112.98" cy="1216.6" r="1.45"/><circle cx="1119.60" cy="1216.6" r="1.45"/><circle cx="1126.22" cy="1216.6" r="1.45"/><circle cx="1132.84" cy="1216.6" r="1.45"/><circle cx="1139.46" cy="1216.6" r="1.45"/><circle cx="1146.08" cy="1216.6" r="1.45"/><circle cx="1152.70" cy="1216.6" r="1.45"/><circle cx="1159.32" cy="1216.6" r="1.45"/><circle cx="1165.94" cy="1216.6" r="1.45"/><circle cx="1172.56" cy="1216.6" r="1.45"/><circle cx="1179.18" cy="1216.6" r="1.45"/><circle cx="1185.80" cy="1216.6" r="1.45"/><circle cx="1192.42" cy="1216.6" r="1.45"/><circle cx="1199.04" cy="1216.6" r="1.45"/><circle cx="1205.66" cy="1216.6" r="1.45"/><circle cx="1212.28" cy="1216.6" r="1.45"/><circle cx="1218.90" cy="1216.6" r="1.45"/><circle cx="1225.52" cy="1216.6" r="1.45"/><circle cx="1232.14" cy="1216.6" r="1.45"/><circle cx="1238.76" cy="1216.6" r="1.45"/><circle cx="1245.38" cy="1216.6" r="1.45"/><circle cx="1252.00" cy="1216.6" r="1.45"/><circle cx="1258.62" cy="1216.6" r="1.45"/><circle cx="1265.24" cy="1216.6" r="1.45"/><circle cx="1271.86" cy="1216.6" r="1.45"/><circle cx="1278.48" cy="1216.6" r="1.45"/><circle cx="1285.10" cy="1216.6" r="1.45"/><circle cx="1291.72" cy="1216.6" r="1.45"/><circle cx="1298.34" cy="1216.6" r="1.45"/><circle cx="1304.96" cy="1216.6" r="1.45"/><circle cx="1311.58" cy="1216.6" r="1.45"/><circle cx="1318.20" cy="1216.6" r="1.45"/><circle cx="1324.82" cy="1216.6" r="1.45"/><circle cx="1331.44" cy="1216.6" r="1.45"/><circle cx="1338.06" cy="1216.6" r="1.45"/><circle cx="1344.68" cy="1216.6" r="1.45"/><circle cx="1351.30" cy="1216.6" r="1.45"/><circle cx="1357.92" cy="1216.6" r="1.45"/><circle cx="1364.54" cy="1216.6" r="1.45"/><circle cx="1371.16" cy="1216.6" r="1.45"/><circle cx="1377.78" cy="1216.6" r="1.45"/><circle cx="1384.40" cy="1216.6" r="1.45"/><circle cx="1391.02" cy="1216.6" r="1.45"/><circle cx="1397.64" cy="1216.6" r="1.45"/><circle cx="1404.26" cy="1216.6" r="1.45"/><circle cx="1410.88" cy="1216.6" r="1.45"/><circle cx="1417.50" cy="1216.6" r="1.45"/><circle cx="1424.12" cy="1216.6" r="1.45"/><circle cx="1430.74" cy="1216.6" r="1.45"/><circle cx="1437.36" cy="1216.6" r="1.45"/><circle cx="1443.98" cy="1216.6" r="1.45"/><circle cx="1450.60" cy="1216.6" r="1.45"/><circle cx="1457.22" cy="1216.6" r="1.45"/><circle cx="1463.84" cy="1216.6" r="1.45"/><circle cx="1470.46" cy="1216.6" r="1.45"/><circle cx="1477.08" cy="1216.6" r="1.45"/><circle cx="1483.70" cy="1216.6" r="1.45"/><circle cx="1490.32" cy="1216.6" r="1.45"/><circle cx="1496.94" cy="1216.6" r="1.45"/><circle cx="1503.56" cy="1216.6" r="1.45"/><circle cx="1510.18" cy="1216.6" r="1.45"/><circle cx="1516.80" cy="1216.6" r="1.45"/><circle cx="1523.42" cy="1216.6" r="1.45"/><circle cx="1530.04" cy="1216.6" r="1.45"/><circle cx="1536.66" cy="1216.6" r="1.45"/><circle cx="1543.28" cy="1216.6" r="1.45"/><circle cx="1549.90" cy="1216.6" r="1.45"/><circle cx="1556.52" cy="1216.6" r="1.45"/><circle cx="1563.14" cy="1216.6" r="1.45"/><circle cx="1569.76" cy="1216.6" r="1.45"/><circle cx="1576.38" cy="1216.6" r="1.45"/><circle cx="1583.00" cy="1216.6" r="1.45"/><circle cx="1589.62" cy="1216.6" r="1.45"/><circle cx="1596.24" cy="1216.6" r="1.45"/><circle cx="1602.86" cy="1216.6" r="1.45"/></g><path d="M493.70,1181.80 C498.40,1194.00 503.10,1206.20 507.80,1206.20 C509.60,1206.20 511.40,1187.89 513.20,1181.30 C514.63,1176.05 516.07,1168.80 517.50,1168.80 C519.33,1168.80 521.17,1169.53 523.00,1171.00 C524.80,1172.44 526.60,1181.90 528.40,1183.50 C532.00,1186.70 535.60,1187.58 539.20,1188.30 C541.20,1188.70 543.20,1188.90 545.20,1188.90 C546.47,1188.90 547.73,1187.27 549.00,1184.00 C549.73,1182.11 550.47,1171.69 551.20,1165.00 C552.27,1155.26 553.33,1139.65 554.40,1133.50 C555.13,1129.28 555.87,1127.95 556.60,1127.00 C560.03,1122.53 563.47,1121.33 566.90,1120.30 C568.90,1119.70 570.90,1119.40 572.90,1119.40 C573.63,1119.40 574.37,1121.40 575.10,1125.40 C575.80,1129.22 576.50,1141.58 577.20,1151.00 C577.93,1160.86 578.67,1173.75 579.40,1183.50 C580.13,1193.25 580.87,1204.26 581.60,1209.50 C582.13,1213.31 582.67,1215.33 583.20,1215.50 C585.47,1216.23 587.73,1216.42 590.00,1216.60" fill="none" stroke="#86c9ee" stroke-width="2.9" stroke-dasharray="0.01 6.6" stroke-linecap="round"/><path d="M493.70,1177.50 C494.63,1178.05 495.57,1178.60 496.50,1180.80 C497.33,1182.76 498.17,1186.32 499.00,1190.00 C499.87,1193.83 500.73,1200.39 501.60,1203.50 C502.73,1207.57 503.87,1209.54 505.00,1209.60 C510.27,1209.87 515.53,1209.73 520.80,1210.00 C524.07,1210.17 527.33,1212.20 530.60,1212.20 C535.67,1212.20 540.73,1211.70 545.80,1211.70 C547.23,1211.70 548.67,1212.17 550.10,1212.70 C552.27,1213.51 554.43,1216.50 556.60,1216.50 C560.93,1216.50 565.27,1216.00 569.60,1216.00 C575.03,1216.00 580.47,1216.80 585.90,1216.80 C592.03,1216.80 598.17,1215.25 604.30,1214.40 C606.87,1214.04 609.43,1214.03 612.00,1213.30 C613.07,1213.00 614.13,1209.50 615.20,1201.90 C616.30,1194.06 617.40,1169.60 618.50,1158.50 C619.57,1147.74 620.63,1137.78 621.70,1135.70 C623.17,1132.83 624.63,1134.27 626.10,1131.40 C627.17,1129.32 628.23,1123.91 629.30,1115.10 C630.40,1106.02 631.50,1084.80 632.60,1077.10 C634.20,1065.90 635.80,1060.30 637.40,1060.30 C639.03,1060.30 640.67,1065.90 642.30,1077.10 C643.40,1084.64 644.50,1118.61 645.60,1136.80 C646.27,1147.83 646.93,1161.33 647.60,1168.00 C648.47,1176.67 649.33,1178.72 650.20,1181.00 C651.47,1184.33 652.73,1183.11 654.00,1186.00 C655.53,1189.50 657.07,1198.83 658.60,1201.90 C660.23,1205.17 661.87,1206.80 663.50,1206.80 C665.50,1206.80 667.50,1202.63 669.50,1194.30 C670.53,1189.99 671.57,1179.35 672.60,1175.00 C673.60,1170.79 674.60,1168.20 675.60,1168.20 C676.60,1168.20 677.60,1168.53 678.60,1169.20 C679.90,1170.07 681.20,1174.56 682.50,1177.00 C684.30,1180.38 686.10,1185.87 687.90,1186.20 C689.70,1186.53 691.50,1186.45 693.30,1186.70 C696.57,1187.16 699.83,1188.90 703.10,1188.90 C704.53,1188.90 705.97,1186.00 707.40,1180.20 C708.87,1174.27 710.33,1144.92 711.80,1136.80 C713.23,1128.87 714.67,1125.63 716.10,1124.90 C717.53,1124.17 718.97,1124.36 720.40,1123.80 C723.17,1122.72 725.93,1118.40 728.70,1118.40 C730.13,1118.40 731.57,1119.10 733.00,1120.50 C734.47,1121.93 735.93,1131.94 737.40,1134.60 C739.20,1137.87 741.00,1139.50 742.80,1139.50 C744.23,1139.50 745.67,1138.07 747.10,1136.80 C748.90,1135.21 750.70,1130.30 752.50,1130.30 C754.33,1130.30 756.17,1130.67 758.00,1131.40 C759.07,1131.83 760.13,1136.56 761.20,1140.00 C762.67,1144.72 764.13,1155.61 765.60,1157.40 C767.40,1159.60 769.20,1158.50 771.00,1160.70 C772.43,1162.45 773.87,1166.79 775.30,1169.30 C776.77,1171.87 778.23,1174.76 779.70,1175.90 C781.50,1177.30 783.30,1176.60 785.10,1178.00 C786.90,1179.40 788.70,1189.77 790.50,1193.20 C792.33,1196.70 794.17,1198.60 796.00,1198.60 C798.87,1198.60 801.73,1192.82 804.60,1192.10 C807.50,1191.37 810.40,1191.64 813.30,1191.00 C815.37,1190.54 817.43,1190.40 819.50,1189.20 C820.87,1188.41 822.23,1186.13 823.60,1180.00 C824.87,1174.32 826.13,1144.41 827.40,1126.00 C828.50,1110.01 829.60,1082.72 830.70,1077.10 C831.97,1070.63 833.23,1067.40 834.50,1067.40 C836.10,1067.40 837.70,1069.93 839.30,1075.00 C841.13,1080.81 842.97,1105.68 844.80,1108.60 C846.60,1111.47 848.40,1110.03 850.20,1112.90 C851.63,1115.18 853.07,1130.72 854.50,1136.80 C856.67,1145.99 858.83,1151.40 861.00,1151.40 C863.90,1151.40 866.80,1144.59 869.70,1142.80 C871.87,1141.46 874.03,1142.07 876.20,1140.60 C878.73,1138.89 881.27,1129.57 883.80,1128.10 C885.63,1127.03 887.47,1127.57 889.30,1126.50 C890.73,1125.67 892.17,1120.08 893.60,1118.40 C895.77,1115.87 897.93,1114.60 900.10,1114.60 C901.90,1114.60 903.70,1118.96 905.50,1124.90 C906.97,1129.74 908.43,1142.66 909.90,1144.40 C911.70,1146.53 913.50,1145.47 915.30,1147.60 C917.10,1149.73 918.90,1155.84 920.70,1157.40 C923.23,1159.60 925.77,1158.50 928.30,1160.70 C930.10,1162.26 931.90,1175.17 933.70,1180.20 C935.53,1185.32 937.37,1191.00 939.20,1191.00 C941.00,1191.00 942.80,1186.34 944.60,1180.20 C946.03,1175.31 947.47,1162.13 948.90,1160.70 C950.37,1159.23 951.83,1159.25 953.30,1158.50 C956.03,1157.11 958.77,1155.09 961.50,1154.20 C963.67,1153.49 965.83,1153.83 968.00,1153.10 C969.47,1152.60 970.93,1147.52 972.40,1145.00 C974.37,1141.62 976.33,1135.80 978.30,1135.80 C979.93,1135.80 981.57,1137.07 983.20,1139.60 C984.63,1141.82 986.07,1160.65 987.50,1165.60 C988.97,1170.67 990.43,1173.20 991.90,1173.20 C993.33,1173.20 994.77,1168.69 996.20,1160.20 C997.67,1151.52 999.13,1127.92 1000.60,1121.10 C1002.23,1113.50 1003.87,1109.70 1005.50,1109.70 C1007.10,1109.70 1008.70,1112.79 1010.30,1116.80 C1011.93,1120.89 1013.57,1132.46 1015.20,1134.20 C1017.20,1136.33 1019.20,1135.27 1021.20,1137.40 C1023.00,1139.32 1024.80,1147.74 1026.60,1149.30 C1029.13,1151.50 1031.67,1150.40 1034.20,1152.60 C1036.73,1154.80 1039.27,1164.50 1041.80,1164.50 C1043.60,1164.50 1045.40,1164.17 1047.20,1163.50 C1049.00,1162.83 1050.80,1152.75 1052.60,1150.40 C1054.23,1148.27 1055.87,1147.20 1057.50,1147.20 C1059.13,1147.20 1060.77,1148.27 1062.40,1150.40 C1063.87,1152.32 1065.33,1167.95 1066.80,1168.90 C1068.97,1170.30 1071.13,1169.60 1073.30,1171.00 C1074.73,1171.93 1076.17,1177.51 1077.60,1179.70 C1079.40,1182.45 1081.20,1184.60 1083.00,1184.60 C1084.83,1184.60 1086.67,1182.27 1088.50,1177.60 C1089.93,1173.95 1091.37,1163.10 1092.80,1161.30 C1094.23,1159.50 1095.67,1158.60 1097.10,1158.60 C1098.57,1158.60 1100.03,1160.76 1101.50,1163.50 C1103.30,1166.86 1105.10,1177.47 1106.90,1178.60 C1108.70,1179.73 1110.50,1179.17 1112.30,1180.30 C1114.10,1181.43 1115.90,1186.60 1117.70,1188.40 C1119.33,1190.04 1120.97,1191.10 1122.60,1191.10 C1123.87,1191.10 1125.13,1188.03 1126.40,1181.90 C1127.87,1174.80 1129.33,1128.59 1130.80,1116.80 C1132.60,1102.33 1134.40,1095.10 1136.20,1095.10 C1138.00,1095.10 1139.80,1096.90 1141.60,1100.50 C1143.07,1103.43 1144.53,1111.71 1146.00,1113.50 C1147.80,1115.70 1149.60,1114.60 1151.40,1116.80 C1152.83,1118.55 1154.27,1126.05 1155.70,1129.80 C1157.87,1135.47 1160.03,1142.80 1162.20,1142.80 C1164.03,1142.80 1165.87,1141.62 1167.70,1139.60 C1169.13,1138.02 1170.57,1134.23 1172.00,1133.10 C1173.43,1131.97 1174.87,1132.53 1176.30,1131.40 C1177.40,1130.53 1178.50,1118.70 1179.60,1106.00 C1180.67,1093.68 1181.73,1062.76 1182.80,1057.10 C1184.63,1047.37 1186.47,1042.50 1188.30,1042.50 C1190.53,1042.50 1192.77,1044.80 1195.00,1046.30 C1196.23,1047.13 1197.47,1048.37 1198.70,1049.00 C1200.13,1049.73 1201.57,1049.37 1203.00,1050.10 C1204.47,1050.85 1205.93,1062.45 1207.40,1076.10 C1208.83,1089.44 1210.27,1126.07 1211.70,1130.40 C1213.13,1134.73 1214.57,1136.66 1216.00,1136.90 C1220.33,1137.63 1224.67,1137.27 1229.00,1138.00 C1231.20,1138.37 1233.40,1143.81 1235.60,1145.60 C1238.13,1147.66 1240.67,1146.67 1243.20,1148.80 C1245.00,1150.32 1246.80,1166.80 1248.60,1173.80 C1250.77,1182.23 1252.93,1193.30 1255.10,1193.30 C1258.00,1193.30 1260.90,1172.44 1263.80,1169.50 C1265.97,1167.30 1268.13,1168.40 1270.30,1166.20 C1273.20,1163.26 1276.10,1149.90 1279.00,1149.90 C1281.17,1149.90 1283.33,1153.51 1285.50,1156.40 C1288.03,1159.78 1290.57,1169.50 1293.10,1169.50 C1294.90,1169.50 1296.70,1165.87 1298.50,1158.60 C1299.40,1154.97 1300.30,1143.75 1301.20,1138.00 C1302.07,1132.46 1302.93,1126.19 1303.80,1124.50 C1305.20,1121.77 1306.60,1123.13 1308.00,1120.40 C1309.17,1118.12 1310.33,1095.92 1311.50,1065.30 C1312.60,1036.43 1313.70,971.67 1314.80,946.00 C1316.60,904.00 1318.40,883.00 1320.20,883.00 C1322.00,883.00 1323.80,899.51 1325.60,924.30 C1326.87,941.74 1328.13,976.38 1329.40,993.00 C1330.33,1005.24 1331.27,1016.90 1332.20,1019.50 C1333.47,1023.03 1334.73,1023.65 1336.00,1024.80 C1337.47,1026.13 1338.93,1025.74 1340.40,1026.80 C1342.00,1027.96 1343.60,1029.78 1345.20,1031.70 C1347.00,1033.86 1348.80,1034.23 1350.60,1039.30 C1352.77,1045.40 1354.93,1089.03 1357.10,1093.50 C1358.17,1095.70 1359.23,1096.80 1360.30,1096.80 C1362.13,1096.80 1363.97,1090.45 1365.80,1087.00 C1367.97,1082.92 1370.13,1074.00 1372.30,1074.00 C1373.73,1074.00 1375.17,1077.60 1376.60,1084.80 C1378.07,1092.17 1379.53,1136.17 1381.00,1139.10 C1383.17,1143.43 1385.33,1141.77 1387.50,1145.60 C1390.37,1150.66 1393.23,1169.50 1396.10,1169.50 C1399.00,1169.50 1401.90,1169.13 1404.80,1168.40 C1406.97,1167.85 1409.13,1165.10 1411.30,1165.10 C1413.47,1165.10 1415.63,1171.13 1417.80,1173.80 C1420.33,1176.92 1422.87,1182.20 1425.40,1182.20 C1427.23,1182.20 1429.07,1181.65 1430.90,1181.10 C1433.07,1180.45 1435.23,1178.40 1437.40,1178.40 C1439.20,1178.40 1441.00,1179.33 1442.80,1180.60 C1444.60,1181.87 1446.40,1184.93 1448.20,1186.00 C1450.00,1187.07 1451.80,1186.53 1453.60,1187.60 C1455.07,1188.47 1456.53,1190.78 1458.00,1192.00 C1460.17,1193.80 1462.33,1195.80 1464.50,1195.80 C1466.67,1195.80 1468.83,1193.32 1471.00,1192.00 C1472.43,1191.12 1473.87,1190.11 1475.30,1189.30 C1477.13,1188.26 1478.97,1188.40 1480.80,1186.60 C1481.87,1185.55 1482.93,1172.73 1484.00,1168.10 C1486.17,1158.70 1488.33,1154.00 1490.50,1154.00 C1492.33,1154.00 1494.17,1156.49 1496.00,1158.40 C1498.50,1161.01 1501.00,1168.70 1503.50,1168.70 C1505.33,1168.70 1507.17,1166.29 1509.00,1163.80 C1511.53,1160.36 1514.07,1148.60 1516.60,1148.60 C1518.40,1148.60 1520.20,1150.69 1522.00,1152.90 C1524.70,1156.22 1527.40,1168.10 1530.10,1168.10 C1531.73,1168.10 1533.37,1165.10 1535.00,1162.70 C1537.70,1158.74 1540.40,1145.90 1543.10,1145.90 C1545.10,1145.90 1547.10,1147.53 1549.10,1150.80 C1551.47,1154.67 1553.83,1171.40 1556.20,1171.40 C1557.80,1171.40 1559.40,1169.92 1561.00,1168.10 C1563.53,1165.21 1566.07,1154.00 1568.60,1154.00 C1570.43,1154.00 1572.27,1155.10 1574.10,1157.30 C1575.53,1159.02 1576.97,1182.38 1578.40,1184.40 C1580.20,1186.93 1582.00,1187.18 1583.80,1188.20 C1584.90,1188.82 1586.00,1188.73 1587.10,1189.80 C1588.53,1191.19 1589.97,1196.30 1591.40,1196.90 C1593.93,1197.97 1596.47,1197.43 1599.00,1198.50 C1600.80,1199.26 1602.60,1201.91 1604.40,1202.80 C1605.87,1203.53 1607.33,1203.71 1608.80,1203.90" fill="none" stroke="#13a5e8" stroke-width="2.9" stroke-linejoin="round" stroke-linecap="round"/></svg>
<svg class="abs" style="left:820px;top:1300px" width="240" height="16" viewBox="820 1300 240 16"><path d="M826 1307.6 H845.6" stroke="#13a5e8" stroke-width="2.8" stroke-linecap="round"/><g fill="#86c9ee"><circle cx="1036.4" cy="1307.6" r="1.3"/><circle cx="1045" cy="1307.6" r="1.3"/><circle cx="1053.6" cy="1307.6" r="1.3"/></g></svg>
<div class="t" style="left:853.60px;top:1298.36px;font-size:18px;color:#6d7175;font-weight:400;letter-spacing:-0.15px">Jul 1&#8211;Sep 24, 2025</div>
<div class="t" style="left:1064.80px;top:1298.46px;font-size:18px;color:#6d7175;font-weight:400;letter-spacing:-0.36px">Jul 13&#8211;19, 2025</div>
<div class="card" style="left:1665px;top:740.6px;width:616px;height:611.6px"></div>
<div class="t" style="left:1691.20px;top:771.62px;font-size:21px;color:#303030;font-weight:400;letter-spacing:0.535px;-webkit-text-stroke:0.6px #303030">Total sales breakdown</div>
<svg class="abs" style="left:1690.2px;top:792.4px" width="222.0" height="6" viewBox="1690.20 792.40 222.00 6"><g fill="#b8b8b8"><circle cx="1692.25" cy="795.40" r="1.05"/><circle cx="1697.81" cy="795.40" r="1.05"/><circle cx="1703.37" cy="795.40" r="1.05"/><circle cx="1708.93" cy="795.40" r="1.05"/><circle cx="1714.50" cy="795.40" r="1.05"/><circle cx="1720.06" cy="795.40" r="1.05"/><circle cx="1725.62" cy="795.40" r="1.05"/><circle cx="1731.18" cy="795.40" r="1.05"/><circle cx="1736.74" cy="795.40" r="1.05"/><circle cx="1742.30" cy="795.40" r="1.05"/><circle cx="1747.87" cy="795.40" r="1.05"/><circle cx="1753.43" cy="795.40" r="1.05"/><circle cx="1758.99" cy="795.40" r="1.05"/><circle cx="1764.55" cy="795.40" r="1.05"/><circle cx="1770.11" cy="795.40" r="1.05"/><circle cx="1775.67" cy="795.40" r="1.05"/><circle cx="1781.23" cy="795.40" r="1.05"/><circle cx="1786.80" cy="795.40" r="1.05"/><circle cx="1792.36" cy="795.40" r="1.05"/><circle cx="1797.92" cy="795.40" r="1.05"/><circle cx="1803.48" cy="795.40" r="1.05"/><circle cx="1809.04" cy="795.40" r="1.05"/><circle cx="1814.60" cy="795.40" r="1.05"/><circle cx="1820.17" cy="795.40" r="1.05"/><circle cx="1825.73" cy="795.40" r="1.05"/><circle cx="1831.29" cy="795.40" r="1.05"/><circle cx="1836.85" cy="795.40" r="1.05"/><circle cx="1842.41" cy="795.40" r="1.05"/><circle cx="1847.97" cy="795.40" r="1.05"/><circle cx="1853.53" cy="795.40" r="1.05"/><circle cx="1859.10" cy="795.40" r="1.05"/><circle cx="1864.66" cy="795.40" r="1.05"/><circle cx="1870.22" cy="795.40" r="1.05"/><circle cx="1875.78" cy="795.40" r="1.05"/><circle cx="1881.34" cy="795.40" r="1.05"/><circle cx="1886.90" cy="795.40" r="1.05"/><circle cx="1892.47" cy="795.40" r="1.05"/><circle cx="1898.03" cy="795.40" r="1.05"/><circle cx="1903.59" cy="795.40" r="1.05"/><circle cx="1909.15" cy="795.40" r="1.05"/></g></svg>
<div class="t" style="left:1699.90px;top:832.22px;font-size:21px;color:#2060d0;font-weight:400;letter-spacing:0.07px;-webkit-text-stroke:0.15px #2060d0">Gross sales</div>
<div class="t" style="right:134.20px;top:833.58px;font-size:19.4px;color:#303030;font-weight:400;letter-spacing:-0.05px;margin-right:--0.05px;-webkit-text-stroke:0.6px #303030">$493,757.10</div>
<svg class="abs" style="left:2191.3px;top:837.1px" width="12.4" height="12.4" viewBox="2191.30 837.10 12.40 12.40"><g fill="none" stroke="#108a47" stroke-width="2.45" stroke-linecap="round" stroke-linejoin="round"><path d="M2194.10 846.70 L2200.70 840.10"/><path d="M2195.10 840.10 H2200.70 V845.70"/></g></svg>
<div class="t" style="left:2208.60px;top:835.19px;font-size:17.5px;color:#108a47;font-weight:700;letter-spacing:0.9px">6%</div>
<div class="abs" style="left:1691px;top:875.2px;width:564.5px;height:63px;border-radius:16px;background:#f7f7f7"></div>
<div class="t" style="left:1699.90px;top:896.82px;font-size:21px;color:#2060d0;font-weight:400;letter-spacing:0.5px;-webkit-text-stroke:0.15px #2060d0">Discounts</div>
<div class="t" style="right:134.20px;top:898.18px;font-size:19.4px;color:#303030;font-weight:400;letter-spacing:0.56px;margin-right:-0.56px;-webkit-text-stroke:0.6px #303030">-$18,626.66</div>
<svg class="abs" style="left:2182.8px;top:902.6px" width="12.4" height="12.4" viewBox="2182.80 902.60 12.40 12.40"><g fill="none" stroke="#666666" stroke-width="2.45" stroke-linecap="round" stroke-linejoin="round"><path d="M2185.60 905.40 L2192.20 912.00"/><path d="M2186.60 912.00 H2192.20 V906.40"/></g></svg>
<div class="t" style="left:2199.90px;top:899.79px;font-size:17.5px;color:#666666;font-weight:400;letter-spacing:0.9px;-webkit-text-stroke:0.3px #666666">0.2%</div>
<div class="t" style="left:1699.90px;top:961.42px;font-size:21px;color:#2060d0;font-weight:400;letter-spacing:0.2px;-webkit-text-stroke:0.15px #2060d0">Returns</div>
<div class="t" style="right:134.20px;top:962.78px;font-size:19.4px;color:#303030;font-weight:400;letter-spacing:0.5px;margin-right:-0.5px;-webkit-text-stroke:0.6px #303030">-$1,926.55</div>
<svg class="abs" style="left:2185.7px;top:967.2px" width="12.4" height="12.4" viewBox="2185.70 967.20 12.40 12.40"><g fill="none" stroke="#666666" stroke-width="2.45" stroke-linecap="round" stroke-linejoin="round"><path d="M2188.50 970.00 L2195.10 976.60"/><path d="M2189.50 976.60 H2195.10 V971.00"/></g></svg>
<div class="t" style="left:2202.80px;top:964.39px;font-size:17.5px;color:#666666;font-weight:400;letter-spacing:0.85px;-webkit-text-stroke:0.3px #666666">22%</div>
<div class="abs" style="left:1691px;top:1004.4px;width:564.5px;height:63px;border-radius:16px;background:#f7f7f7"></div>
<div class="t" style="left:1699.90px;top:1026.02px;font-size:21px;color:#2060d0;font-weight:400;letter-spacing:0.18px;-webkit-text-stroke:0.15px #2060d0">Net sales</div>
<div class="t" style="right:134.20px;top:1027.38px;font-size:19.4px;color:#303030;font-weight:400;letter-spacing:0.88px;margin-right:-0.88px;-webkit-text-stroke:0.6px #303030">$473,203.89</div>
<svg class="abs" style="left:2191.3px;top:1030.9px" width="12.4" height="12.4" viewBox="2191.30 1030.90 12.40 12.40"><g fill="none" stroke="#108a47" stroke-width="2.45" stroke-linecap="round" stroke-linejoin="round"><path d="M2194.10 1040.50 L2200.70 1033.90"/><path d="M2195.10 1033.90 H2200.70 V1039.50"/></g></svg>
<div class="t" style="left:2208.60px;top:1028.99px;font-size:17.5px;color:#108a47;font-weight:700;letter-spacing:0.9px">6%</div>
<div class="t" style="left:1699.90px;top:1090.62px;font-size:21px;color:#2060d0;font-weight:400;letter-spacing:0.41px;-webkit-text-stroke:0.15px #2060d0">Shipping charges</div>
<div class="t" style="right:134.20px;top:1091.98px;font-size:19.4px;color:#303030;font-weight:400;letter-spacing:-0.05px;margin-right:--0.05px;-webkit-text-stroke:0.6px #303030">$17,829.27</div>
<svg class="abs" style="left:2191.5px;top:1095.5px" width="12.4" height="12.4" viewBox="2191.50 1095.50 12.40 12.40"><g fill="none" stroke="#108a47" stroke-width="2.45" stroke-linecap="round" stroke-linejoin="round"><path d="M2194.30 1105.10 L2200.90 1098.50"/><path d="M2195.30 1098.50 H2200.90 V1104.10"/></g></svg>
<div class="t" style="left:2209.00px;top:1093.59px;font-size:17.5px;color:#108a47;font-weight:700;letter-spacing:0.9px">7%</div>
<div class="abs" style="left:1691px;top:1133.6px;width:564.5px;height:63px;border-radius:16px;background:#f7f7f7"></div>
<div class="t" style="left:1699.90px;top:1155.22px;font-size:21px;color:#2060d0;font-weight:400;letter-spacing:0.2px;-webkit-text-stroke:0.15px #2060d0">Return fees</div>
<div class="t" style="right:134.20px;top:1156.58px;font-size:19.4px;color:#303030;font-weight:400;letter-spacing:1.05px;margin-right:-1.05px;-webkit-text-stroke:0.6px #303030">$0.00</div>
<div class="abs" style="left:2205.9px;top:1164.8px;width:18px;height:2.2px;background:#8a8a8a"></div>
<div class="t" style="left:1699.90px;top:1219.82px;font-size:21px;color:#2060d0;font-weight:400;letter-spacing:0.24px;-webkit-text-stroke:0.15px #2060d0">Taxes</div>
<div class="t" style="right:134.20px;top:1221.18px;font-size:19.4px;color:#303030;font-weight:400;letter-spacing:0.42px;margin-right:-0.42px;-webkit-text-stroke:0.6px #303030">$2,827.39</div>
<svg class="abs" style="left:2191.5px;top:1224.7px" width="12.4" height="12.4" viewBox="2191.50 1224.70 12.40 12.40"><g fill="none" stroke="#8a8a8a" stroke-width="2.45" stroke-linecap="round" stroke-linejoin="round"><path d="M2194.30 1234.30 L2200.90 1227.70"/><path d="M2195.30 1227.70 H2200.90 V1233.30"/></g></svg>
<div class="t" style="left:2209.00px;top:1222.79px;font-size:17.5px;color:#8a8a8a;font-weight:400;letter-spacing:0.9px;-webkit-text-stroke:0.3px #8a8a8a">7%</div>
<div class="abs" style="left:1691px;top:1262.8px;width:564.5px;height:63px;border-radius:16px;background:#f7f7f7"></div>
<div class="t" style="left:1699.90px;top:1284.42px;font-size:21px;color:#2060d0;font-weight:400;letter-spacing:0.38px;-webkit-text-stroke:0.15px #2060d0">Total sales</div>
<div class="t" style="right:134.20px;top:1285.78px;font-size:19.4px;color:#303030;font-weight:400;letter-spacing:0.89px;margin-right:-0.89px;-webkit-text-stroke:0.6px #303030">$493,860.55</div>
<svg class="abs" style="left:2191.3px;top:1289.3px" width="12.4" height="12.4" viewBox="2191.30 1289.30 12.40 12.40"><g fill="none" stroke="#108a47" stroke-width="2.45" stroke-linecap="round" stroke-linejoin="round"><path d="M2194.10 1298.90 L2200.70 1292.30"/><path d="M2195.10 1292.30 H2200.70 V1297.90"/></g></svg>
<div class="t" style="left:2208.60px;top:1287.39px;font-size:17.5px;color:#108a47;font-weight:700;letter-spacing:0.9px">6%</div>
</body></html>
